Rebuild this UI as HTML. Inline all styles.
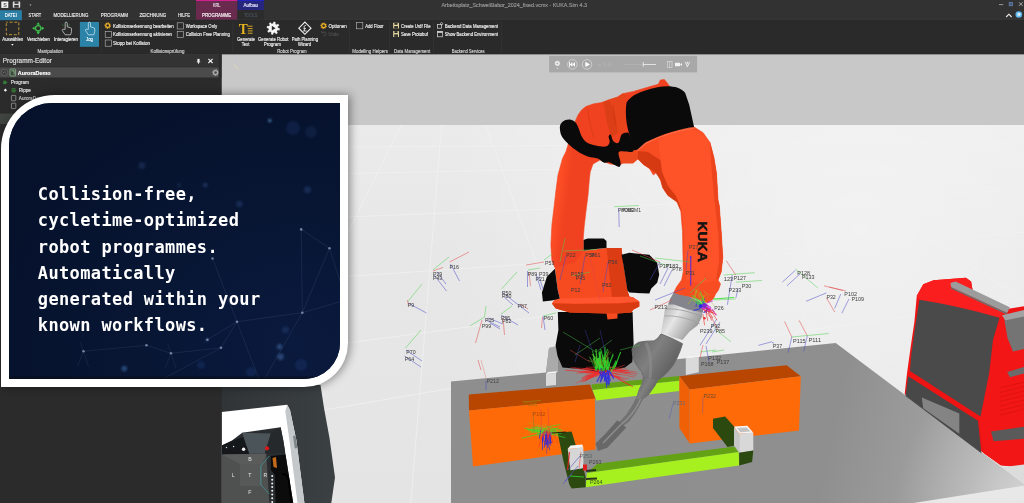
<!DOCTYPE html>
<html><head><meta charset="utf-8">
<style>
html,body{margin:0;padding:0;}
body{width:1024px;height:503px;overflow:hidden;position:relative;background:#e6e6e6;font-family:"Liberation Sans",sans-serif;}
svg{position:absolute;left:0;top:0;}
svg text{font-family:"Liberation Sans",sans-serif;}
#ui text{stroke-width:0.14px;paint-order:stroke;}
#ui,#scene,#card{will-change:transform;}
#card{position:absolute;left:0.5px;top:95px;width:346.5px;height:292px;background:#fff;border-radius:54px 0 44px 0;box-shadow:2px 0px 10px rgba(0,0,0,0.42);}
#cardin{position:absolute;left:7.5px;top:8px;width:331px;height:276px;border-radius:43px 0 36px 0;background:#07142f;overflow:hidden;}
#cardtxt{position:absolute;left:29.3px;top:78.3px;color:#fff;font-family:"DejaVu Sans Mono","Liberation Mono",monospace;font-weight:bold;font-size:17px;letter-spacing:0.37px;line-height:26.15px;white-space:nowrap;}
</style></head>
<body>
<svg id="scene" width="1024" height="503" viewBox="0 0 1024 503">
<defs>
<linearGradient id="sky" x1="0" y1="0" x2="0" y2="1"><stop offset="0" stop-color="#c6c6c6"/><stop offset="1" stop-color="#cdcdcd"/></linearGradient>
<linearGradient id="flr" x1="0" y1="0" x2="0" y2="1"><stop offset="0" stop-color="#ebebeb"/><stop offset="0.35" stop-color="#e7e7e7"/><stop offset="1" stop-color="#e4e4e4"/></linearGradient>
<linearGradient id="l2g" gradientUnits="userSpaceOnUse" x1="550" y1="0" x2="594" y2="6"><stop offset="0" stop-color="#d83a14"/><stop offset="0.25" stop-color="#fb4c24"/><stop offset="0.75" stop-color="#fd4e26"/><stop offset="1" stop-color="#f04220"/></linearGradient>
<linearGradient id="fag" gradientUnits="userSpaceOnUse" x1="660" y1="0" x2="726" y2="-8"><stop offset="0" stop-color="#e03c16"/><stop offset="0.3" stop-color="#fc4a24"/><stop offset="0.8" stop-color="#fb4c24"/><stop offset="1" stop-color="#e23e18"/></linearGradient>
<linearGradient id="tbl" gradientUnits="userSpaceOnUse" x1="451" y1="300" x2="1010" y2="420"><stop offset="0" stop-color="#8e8e8e"/><stop offset="0.7" stop-color="#8f8f8f"/><stop offset="0.85" stop-color="#9c9c9c"/><stop offset="1" stop-color="#adadad"/></linearGradient>
<linearGradient id="torch" x1="0" y1="0" x2="1" y2="0.6"><stop offset="0" stop-color="#5c5c5c"/><stop offset="0.5" stop-color="#808080"/><stop offset="1" stop-color="#5a5a5a"/></linearGradient>
<linearGradient id="silver" x1="0" y1="0" x2="1" y2="0.6"><stop offset="0" stop-color="#9a9a9a"/><stop offset="0.45" stop-color="#e6e6e6"/><stop offset="1" stop-color="#8c8c8c"/></linearGradient>
</defs>
<rect x="221" y="54" width="803" height="72" fill="#c8c8c8"/>
<rect x="221" y="125" width="803" height="378" fill="url(#flr)"/>
<defs><radialGradient id="flrglow" gradientUnits="userSpaceOnUse" cx="860" cy="230" r="420"><stop offset="0" stop-color="#fff" stop-opacity="0.42"/><stop offset="0.6" stop-color="#fff" stop-opacity="0.2"/><stop offset="1" stop-color="#fff" stop-opacity="0"/></radialGradient></defs><rect x="221" y="125" width="803" height="378" fill="url(#flrglow)"/>
<line x1="330.0" y1="409.0" x2="460.0" y2="386.8" stroke="#f2f2f2" stroke-width="0.7"/>
<line x1="221.0" y1="427.5" x2="330.0" y2="409.0" stroke="#f2f2f2" stroke-width="0.7"/>
<line x1="370.0" y1="340.0" x2="460.0" y2="328.0" stroke="#f2f2f2" stroke-width="0.7"/>
<line x1="221.0" y1="360.0" x2="370.0" y2="340.0" stroke="#f2f2f2" stroke-width="0.7"/>
<line x1="460.0" y1="328.0" x2="560.0" y2="314.0" stroke="#f2f2f2" stroke-width="0.7"/>
<line x1="221.0" y1="285.0" x2="560.0" y2="262.0" stroke="#f2f2f2" stroke-width="0.7"/>
<line x1="221.0" y1="222.0" x2="1024.0" y2="190.0" stroke="#f2f2f2" stroke-width="0.7"/>
<line x1="221.0" y1="176.0" x2="1024.0" y2="160.0" stroke="#f2f2f2" stroke-width="0.7"/>
<line x1="221.0" y1="148.0" x2="1024.0" y2="142.0" stroke="#f2f2f2" stroke-width="0.7"/>
<line x1="441.6" y1="125.0" x2="410.8" y2="503.0" stroke="#f2f2f2" stroke-width="0.7"/>
<line x1="401.2" y1="125.0" x2="221.0" y2="490.0" stroke="#f2f2f2" stroke-width="0.7"/>
<line x1="485.7" y1="125.0" x2="550.0" y2="300.0" stroke="#f2f2f2" stroke-width="0.7"/>
<line x1="580.0" y1="125.0" x2="640.0" y2="200.0" stroke="#f2f2f2" stroke-width="0.7"/>
<line x1="760.0" y1="125.0" x2="1024.0" y2="300.0" stroke="#f2f2f2" stroke-width="0.7"/>
<line x1="860.0" y1="125.0" x2="1024.0" y2="205.0" stroke="#f2f2f2" stroke-width="0.7"/>
<line x1="680.0" y1="125.0" x2="820.0" y2="340.0" stroke="#f2f2f2" stroke-width="0.7"/>
<line x1="720.0" y1="260.0" x2="1024.0" y2="232.0" stroke="#f2f2f2" stroke-width="0.7"/>
<line x1="740.0" y1="340.0" x2="1024.0" y2="300.0" stroke="#f2f2f2" stroke-width="0.7"/>
<polygon points="451.0,381.5 546.0,372.6 549.0,348.0 560.0,346.0 640.0,346.0 640.0,363.0 835.7,343.1 1024.0,484.0 1024.0,485.6 913.5,503.0 451.0,503.0" fill="url(#tbl)" />
<defs><radialGradient id="tglow" gradientUnits="userSpaceOnUse" cx="1045" cy="505" r="150"><stop offset="0" stop-color="#fff" stop-opacity="0.55"/><stop offset="0.5" stop-color="#fff" stop-opacity="0.22"/><stop offset="1" stop-color="#fff" stop-opacity="0"/></radialGradient></defs>
<polygon points="835.7,343.1 1024.0,484.0 1024.0,485.6 913.5,503.0 800.0,503.0" fill="url(#tglow)" />
<polygon points="546.0,372.6 549.0,348.0 558.0,345.6 558.0,372.0" fill="#aaaaaa" />
<polygon points="557.8,312.0 558.4,330.0 555.6,345.3 557.5,356.0 562.5,367.6 585.3,369.5 600.0,373.0 625.0,367.5 632.2,362.0 633.6,344.0 632.6,312.0" fill="#0a0a0a" />
<polygon points="583.3,250.8 606.5,247.9 621.5,247.9 623.4,264.8 627.4,290.6 629.4,296.6 633.4,297.6 639.3,301.5 639.3,306.5 633.4,309.5 631.4,312.5 617.5,313.5 617.5,318.4 607.5,319.4 606.5,313.5 569.8,312.5 555.8,308.5 551.9,303.5 554.9,299.6 559.8,298.6 557.8,290.6 554.9,267.7" fill="#f64a20" />
<polygon points="554.9,299.6 559.8,298.6 629.4,296.6 633.4,297.6 639.3,301.5 620.0,303.0 575.0,303.5 552.5,302.5" fill="#ff5630" />
<polygon points="551.9,303.5 575.0,304.0 620.0,303.5 639.3,302.0 639.3,306.5 633.4,309.5 631.4,312.5 617.5,313.5 606.5,313.5 569.8,312.5 555.8,308.5" fill="#d83a12" />
<polygon points="606.5,247.9 621.5,247.9 623.4,264.8 627.4,290.6 629.4,296.6 612.0,297.0" fill="#dc3c14" />
<polygon points="621.5,254.8 629.4,252.8 649.3,254.8 657.2,262.8 659.2,274.7 657.2,282.7 651.3,288.6 649.3,293.6 629.4,292.6 627.4,290.6 623.4,264.8" fill="#0a0a0a" />
<polygon points="583.3,239.9 587.7,238.5 603.6,238.5 606.5,240.9 606.5,247.9 595.6,248.9 583.3,250.8" fill="#0a0a0a" />
<polygon points="554.9,268.7 546.9,276.7 541.9,292.6 542.9,301.5 551.9,300.5 559.8,298.6 557.8,290.6" fill="#0a0a0a" />
<polygon points="558.0,175.0 562.5,158.5 566.0,151.5 571.0,135.0 574.0,124.0 577.9,115.2 581.5,110.0 585.9,106.5 593.8,103.8 601.8,102.5 608.2,100.1 617.7,96.9 622.5,93.7 633.6,91.4 650.0,86.6 658.3,84.2 660.3,80.0 664.3,79.4 667.3,83.0 669.3,85.9 640.0,100.0 634.0,150.0 630.0,158.0 620.0,165.0 610.0,164.0 600.0,160.0 593.0,164.0 590.2,172.0 589.3,180.0 588.0,195.5 586.0,211.0 584.2,226.5 583.2,238.9 583.3,250.8 575.0,262.0 554.9,267.7 551.9,260.8 550.9,244.9 551.9,225.0 554.2,205.8 556.0,190.0" fill="url(#l2g)" stroke="#f04420" stroke-width="0.6" stroke-linejoin="round"/>
<polygon points="618.0,146.0 638.0,148.0 639.5,158.0 633.0,163.5 622.0,163.5 615.0,158.0" fill="#ee4a20" />
<polygon points="601.8,102.5 608.2,100.1 617.7,96.9 622.5,93.7 627.0,95.0 625.0,112.0 626.0,128.0 624.0,135.0 617.7,133.0 611.3,137.5 607.4,124.7 605.0,112.0" fill="#e8441c" />
<polygon points="604.2,102.0 609.7,100.4 615.3,116.8 617.7,132.7 611.3,137.5 607.4,124.7 605.0,112.0" fill="#dc3e18" />
<path d="M587.5,108.8 C589,120 591.5,129.5 593.8,137.5" stroke="#dc3e16" stroke-width="1" fill="none"/>
<path d="M612.5,105 l1.4,2 l-1.2,1.6 l1.6,2 l-1.2,1.6 l1.7,2 l-1.2,1.6 l1.7,2.1 l-1.1,1.6 l1.7,2.1 l-1.1,1.6 l1.6,2.2" stroke="#c2340f" stroke-width="0.7" fill="none"/>
<polygon points="635.5,151.5 637.5,149.6 645.4,142.6 661.3,134.6 677.2,129.7 694.1,127.1 703.1,132.7 710.0,142.6 714.0,158.0 716.5,173.4 718.0,200.0 719.3,205.8 721.2,231.7 722.8,257.5 721.2,271.9 718.0,279.9 720.5,284.0 718.5,290.0 715.6,294.0 713.4,298.8 707.5,302.7 699.5,299.8 689.6,296.8 679.6,297.8 673.7,292.8 676.7,286.8 681.6,279.9 683.2,271.9 683.0,257.5 682.5,231.7 680.8,211.0 677.0,202.0 667.9,195.5 662.7,187.8 660.5,180.0 657.0,172.0 653.4,175.0 649.4,168.4 643.4,164.5 637.5,158.5" fill="#f84c22" stroke="#f04420" stroke-width="0.6" stroke-linejoin="round"/>
<polygon points="637.5,158.5 643.4,164.5 649.4,168.4 655.0,172.0 660.5,180.0 662.7,187.8 667.9,195.5 677.0,202.0 680.8,211.0 678.0,190.0 670.0,172.0 660.0,160.0 648.0,152.0 638.0,151.0" fill="#d63a12" />
<polygon points="658.3,140.6 669.3,132.7 689.2,128.7 701.1,131.7 710.0,142.6 714.0,158.0 716.5,173.4 718.0,200.0 719.3,205.8 721.2,231.7 722.8,257.5 721.2,271.9 718.0,279.9 700.0,284.0 686.0,280.0 684.5,257.5 684.0,231.7 682.0,211.0 676.0,196.0 668.0,186.0 662.0,172.0" fill="#fe5228" />
<polygon points="710.0,142.6 714.0,158.0 716.5,173.4 718.0,200.0 719.3,205.8 721.2,231.7 722.8,257.5 721.2,271.9 718.0,279.9 716.0,279.0 719.0,262.0 718.5,235.0 715.0,205.0 712.0,175.0" fill="#ec441c" />
<path d="M637.5,150.5 L645.4,143.6 C662,135 680,130 694.1,128.1" stroke="#ff6a44" stroke-width="1.4" fill="none"/>
<path d="M626.5,102.8 C630,96 640,91 657.4,87.3 C668,85 680,86 685.2,92.9 L689.2,104.8 L694.1,127.1 C680,129 662,134 645.4,142.6 L637.5,149.6 L633.5,150.5 L629.5,134.6 C626,125 625,112 626.5,102.8Z" fill="#0a0a0a" />
<path d="M559.9,128.7C559.7,126.5 560.1,125.1 560.9,123.7C561.7,122.3 563.2,121.0 564.9,120.3C566.6,119.6 569.1,119.3 570.9,119.7C572.7,120.1 574.5,121.2 575.8,122.7C577.1,124.2 577.8,126.4 578.8,128.7C579.8,131.0 580.5,134.3 581.8,136.6C583.1,138.9 584.5,141.1 586.8,142.6C589.1,144.1 592.6,144.9 595.7,145.6C598.9,146.3 603.4,147.1 605.7,146.6C608.0,146.1 609.1,144.3 609.6,142.6C610.1,140.9 608.4,137.9 608.6,136.6C608.8,135.3 609.8,133.8 610.6,134.6C611.4,135.4 612.3,140.3 613.6,141.6C614.9,142.9 617.3,143.8 618.6,142.6C619.9,141.4 620.3,136.2 621.6,134.6C622.9,132.9 625.2,132.7 626.5,132.7C627.8,132.7 628.3,131.6 629.5,134.6C630.7,137.6 634.2,147.7 633.5,150.5C632.8,153.3 627.8,151.3 625.5,151.5C623.2,151.7 620.8,151.0 619.6,151.5C618.5,152.0 618.4,152.7 618.6,154.5C618.8,156.3 620.4,160.4 620.6,162.5C620.8,164.6 620.4,166.3 619.6,166.8C618.8,167.3 617.3,166.2 615.6,165.5C613.9,164.8 611.6,163.0 609.6,162.5C607.6,162.0 605.7,163.2 603.7,162.5C601.7,161.8 600.4,159.5 597.7,158.5C595.1,157.5 591.1,157.7 587.8,156.5C584.5,155.3 580.9,153.5 577.8,151.5C574.6,149.5 571.5,147.1 568.9,144.6C566.2,142.1 563.4,139.2 561.9,136.6C560.4,133.9 560.1,130.8 559.9,128.7Z" fill="#0a0a0a" />
<text x="0" y="0" transform="translate(698,221.3) rotate(90)" font-size="13" font-weight="bold" fill="#141414" stroke="#141414" stroke-width="0.55" textLength="40.5" lengthAdjust="spacingAndGlyphs">KUKA</text>
<polygon points="591.4,384.5 679.5,375.9 679.5,380.7 592.5,389.9" fill="#62a214" />
<polygon points="592.5,389.9 679.5,380.7 679.5,390.9 596.3,400.6" fill="#a6f020" />
<polygon points="546.0,374.0 556.0,373.0 556.0,385.0 546.0,386.0" fill="#d9d9d9" />
<polygon points="546.0,374.0 548.0,372.0 557.5,371.2 556.0,373.0" fill="#f4f4f4" />
<polygon points="468.8,394.6 590.0,384.6 595.5,398.7 469.0,410.5" fill="#b84500" />
<polygon points="469.0,410.5 594.9,398.5 595.5,449.5 473.0,466.5" fill="#ff6a08" />
<polygon points="685.8,358.5 698.8,357.0 698.8,372.3 685.8,374.9" fill="#dadada" />
<polygon points="685.8,358.5 688.0,356.5 700.5,355.2 698.8,357.0" fill="#f4f4f4" />
<polygon points="679.4,376.2 786.6,365.3 800.8,376.2 689.7,389.6" fill="#b84500" />
<polygon points="679.4,376.2 689.7,389.6 689.7,443.4 679.4,427.9" fill="#f06006" />
<polygon points="689.7,389.6 800.8,376.2 799.0,430.4 689.7,443.4" fill="#ff6a08" />
<polygon points="597.4,463.7 735.7,446.4 738.7,452.0 586.9,473.1" fill="#62a214" />
<polygon points="586.9,473.1 738.7,452.0 739.2,465.6 585.7,487.2" fill="#a6f020" />
<polygon points="557.6,432.8 571.6,431.6 576.0,446.0 568.0,448.0 570.5,470.3 583.4,468.0 585.7,477.3 585.7,487.2 571.6,488.6 569.3,484.4 563.4,460.9" fill="#2c4a10" />
<polygon points="567.7,449.0 583.4,447.4 583.4,468.0 570.5,470.3" fill="#d6d6d6" />
<polygon points="567.7,449.0 570.5,445.6 582.2,444.6 583.4,447.4" fill="#f4f4f4" />
<polygon points="713.0,418.7 725.1,416.4 734.5,427.0 734.0,445.7 727.5,446.9 713.0,428.1" fill="#2c4a10" />
<polygon points="734.0,427.0 739.2,433.5 739.2,452.7 734.0,445.7" fill="#c6c6c6" />
<polygon points="739.2,433.5 753.3,432.8 753.3,450.4 739.2,452.7" fill="#d8d8d8" />
<polygon points="734.0,426.6 747.4,425.8 753.3,432.8 739.2,433.5" fill="#f4f4f4" />
<polygon points="737.0,428.0 746.5,427.4 750.5,431.6 740.3,432.2" fill="#c2c2c2" />
<polygon points="739.2,452.7 753.3,450.4 752.1,462.1 739.2,465.6" fill="#2c4a10" />
<polygon points="668.7,303.7 673.7,297.8 690.0,303.0 703.5,307.7 701.5,317.7 697.5,325.6 689.6,331.6 682.5,340.0 672.0,337.0 661.0,332.5 663.7,317.7 664.7,309.7" fill="url(#silver)" />
<polygon points="673.7,292.8 679.6,294.8 689.6,296.8 699.5,301.7 703.5,307.7 702.8,312.5 688.0,309.5 674.0,304.5 668.2,304.6 670.0,299.0" fill="#84848c" />
<path d="M666,309 C676,308 692,312 702.5,317" stroke="#9a9a9a" stroke-width="0.8" fill="none"/><path d="M664.5,316 C676,315 690,319 700,324" stroke="#a0a0a0" stroke-width="0.8" fill="none"/>
<polygon points="661.0,333.9 672.0,338.5 682.5,343.7 680.0,351.0 677.0,358.0 673.6,364.6 669.0,370.5 663.8,375.7 658.2,379.9 644.0,378.0 641.5,371.5 637.5,366.5 634.6,361.8 632.6,355.0 632.0,349.2 634.5,345.0 638.7,342.3 646.0,341.2 654.1,340.9 658.0,338.0" fill="url(#torch)" stroke="#6a6a6a" stroke-width="1" stroke-linejoin="round"/>
<polygon points="642.9,377.1 658.2,379.9 655.5,385.5 648.5,395.2 642.9,399.4 636.0,398.0 638.7,389.6 641.5,383.5" fill="url(#torch)" />
<polygon points="636.0,398.0 642.9,399.4 636.0,411.9 629.0,421.7 623.4,425.8 617.9,423.6 626.2,414.7 633.2,403.6" fill="#727272" />
<polygon points="617.5,421.3 625.2,427.5 607.0,447.0 598.4,450.0 596.4,443.8 606.4,433.8" fill="#686868" stroke="#686868" stroke-width="1.6" stroke-linejoin="round"/>
<path d="M640.5,399 C636,410 628,419 621,424.5 L603,443" stroke="#9a9a9a" stroke-width="1.3" fill="none" stroke-opacity="0.8"/>
<path d="M646,343 C650,350 652,365 650,378" stroke="#8e8e8e" stroke-width="3" fill="none" stroke-opacity="0.6"/>
<polygon points="923.3,284.2 933.6,280.3 965.9,277.8 971.1,281.6 972.9,292.0 1008.5,308.8 1024.0,306.2 1024.0,467.7 1000.8,465.3 983.9,453.2 909.0,397.3 904.7,394.0 907.0,373.4 910.6,347.5 914.4,321.7 916.8,295.8" fill="#ee1414" />
<polygon points="999.5,317.8 1002.0,315.2 1024.0,310.0 1024.0,467.7 1000.8,465.3 983.9,453.2 979.0,419.4 989.1,373.4 993.0,339.8" fill="#f21616" />
<polygon points="923.3,284.2 933.6,280.3 965.9,277.8 971.1,281.6 972.9,292.0 1008.5,308.8 1002.0,315.2 999.5,317.8 960.0,308.0 919.4,299.7 916.8,295.8" fill="#fb1e1e" />
<path d="M919.4,299.7 Q960,306 999.5,317.8 L993,339.8 L989.1,373.4 L980.5,416.5 L910,371 L911.2,355.3 L914.8,329.4Z" fill="#4a4a4a" />
<polygon points="908.2,376.2 978.0,420.8 981.4,453.2 905.5,396.0" fill="#484848" />
<polygon points="921.8,397.5 959.3,413.6 959.3,433.7 923.2,408.3" fill="#848484" />
<polygon points="950.4,282.9 955.6,281.4 1009.8,307.3 1007.2,313.0 951.2,287.2" fill="#9c9c9c" />
<polygon points="951.2,287.2 1007.2,313.0 1006.6,314.4 950.8,288.6" fill="#6e6e6e" />
<polygon points="1002.0,315.2 1024.0,310.0 1024.0,332.0 1013.7,329.4 1006.0,321.7" fill="#a2a2a2" />
<polygon points="1004.5,320.5 1024.0,316.5 1024.0,349.0 1013.0,351.5 1007.5,338.0" fill="#747474" />
<polygon points="1007.2,372.1 1024.0,366.9 1024.0,373.4 1009.8,377.2" fill="#6b6b6b" />
<polygon points="991.0,431.5 1024.0,426.7 1024.0,438.7 993.5,441.2" fill="#5a5a5a" />
<polygon points="1002.2,467.2 1024.0,464.6 1024.0,483.5" fill="#dcdcdc" />
<line x1="1000" y1="388.0" x2="1024" y2="382.0" stroke="#d41010" stroke-width="0.6"/>
<line x1="1000" y1="392.5" x2="1024" y2="386.5" stroke="#d41010" stroke-width="0.6"/>
<line x1="1000" y1="397.0" x2="1024" y2="391.0" stroke="#d41010" stroke-width="0.6"/>
<line x1="1000" y1="401.5" x2="1024" y2="395.5" stroke="#d41010" stroke-width="0.6"/>
<line x1="1000" y1="406.0" x2="1024" y2="400.0" stroke="#d41010" stroke-width="0.6"/>
<line x1="1000" y1="410.5" x2="1024" y2="404.5" stroke="#d41010" stroke-width="0.6"/>
<line x1="1000" y1="415.0" x2="1024" y2="409.0" stroke="#d41010" stroke-width="0.6"/>
<defs><linearGradient id="slab" x1="0" y1="0" x2="1" y2="0"><stop offset="0" stop-color="#303437"/><stop offset="1" stop-color="#3b4043"/></linearGradient></defs>
<polygon points="221.0,385.0 320.5,385.0 324.0,408.0 329.5,438.0 335.0,477.5 331.3,503.0 221.0,503.0" fill="url(#slab)" />
<polygon points="221.5,412.0 287.2,404.7 290.0,410.0 296.3,440.0 304.4,503.0 221.5,503.0" fill="#ffffff" />
<polygon points="285.3,411.1 287.2,404.7 290.0,410.0 296.3,440.0 304.4,503.0 297.5,503.0 289.4,440.0" fill="#c4c8cb" />
<polygon points="293.0,436.0 295.6,435.6 297.4,448.0 294.8,448.6" fill="#7e8589" />
<polygon points="222.0,445.2 232.0,440.5 242.2,432.8 280.6,427.2 283.2,440.0 293.2,503.0 222.0,503.0" fill="#2a2d2f" />
<polygon points="242.2,432.8 270.9,433.5 264.7,453.7 249.2,453.7" fill="#4b5459" />
<polygon points="270.9,433.5 280.6,427.2 283.2,440.0 285.2,452.5 264.7,453.7" fill="#25292c" />
<polygon points="222.0,445.5 232.0,441.0 243.0,437.0 249.2,453.7 222.0,456.0" fill="#15181a" />
<polygon points="222.0,454.5 266.3,453.7 269.4,503.0 222.0,503.0" fill="#4f5050" />
<polygon points="222.0,454.5 266.3,453.7 262.0,464.0 240.0,464.0" fill="#5a5b5b" />
<polygon points="240.0,464.0 262.0,464.0 262.0,486.0 240.0,486.0" fill="#575858" />
<polygon points="270.9,456.0 285.5,454.5 293.2,503.0 275.6,503.0 274.8,474.7 270.9,470.0" fill="#0c0c0c" />
<path d="M282,474 q6,0 6.5,6 l3,23" stroke="#000" stroke-width="1.8" fill="none"/>
<polygon points="272.5,458.0 276.0,457.0 277.0,468.0 273.5,467.0" fill="#c46a1a" />
<circle cx="267" cy="448.3" r="2.1" fill="#d81818"/>
<circle cx="243.6" cy="449.2" r="1.7" fill="#f2f2f2"/><circle cx="233.6" cy="446.5" r="0.7" fill="#ddd"/><circle cx="226.5" cy="447.5" r="0.7" fill="#ddd"/>
<path d="M269.3,456 L260.8,466.2 L260.8,484.8 L269.3,494" stroke="#3d9ea0" stroke-width="0.7" fill="none"/>
<circle cx="272.2" cy="476.0" r="1" fill="#f4f4f4"/>
<circle cx="272.2" cy="479.7" r="1" fill="#f4f4f4"/>
<circle cx="272.2" cy="483.4" r="1" fill="#f4f4f4"/>
<circle cx="272.2" cy="487.1" r="1" fill="#f4f4f4"/>
<circle cx="272.2" cy="490.8" r="1" fill="#f4f4f4"/>
<circle cx="272.2" cy="494.5" r="1" fill="#f4f4f4"/>
<circle cx="272.2" cy="498.2" r="1" fill="#f4f4f4"/>
<circle cx="272.2" cy="501.9" r="1" fill="#f4f4f4"/>
<text x="249.9" y="461.2" font-size="5.2" fill="#e6e6e6" text-anchor="middle">B</text>
<text x="233.3" y="477.4" font-size="5.2" fill="#e6e6e6" text-anchor="middle">L</text>
<text x="249.9" y="477.4" font-size="5.2" fill="#e6e6e6" text-anchor="middle">T</text>
<text x="265.3" y="477.4" font-size="5.2" fill="#e6e6e6" text-anchor="middle">R</text>
<text x="249.9" y="494.4" font-size="5.2" fill="#e6e6e6" text-anchor="middle">F</text>
<line x1="235.6" y1="56" x2="235.6" y2="63.5" stroke="#c2c2d2" stroke-width="0.8"/><line x1="233.5" y1="64.5" x2="238" y2="69" stroke="#d6d2b8" stroke-width="1.2"/>
<line x1="449.6" y1="262.0" x2="469.0" y2="252.0" stroke="#e04646" stroke-width="0.60" stroke-opacity="0.85"/>
<line x1="450.5" y1="264.0" x2="459.5" y2="281.0" stroke="#4a4ac8" stroke-width="0.60" stroke-opacity="0.85"/>
<line x1="432.9" y1="270.0" x2="449.0" y2="257.0" stroke="#4fd04f" stroke-width="0.60" stroke-opacity="0.85"/>
<line x1="433.0" y1="271.0" x2="443.0" y2="267.5" stroke="#e04646" stroke-width="0.60" stroke-opacity="0.85"/>
<line x1="434.0" y1="275.0" x2="446.5" y2="291.0" stroke="#4a4ac8" stroke-width="0.60" stroke-opacity="0.85"/>
<line x1="437.0" y1="272.0" x2="446.0" y2="284.0" stroke="#4a4ac8" stroke-width="0.60" stroke-opacity="0.85"/>
<line x1="407.5" y1="302.0" x2="422.0" y2="284.0" stroke="#4fd04f" stroke-width="0.60" stroke-opacity="0.85"/>
<line x1="408.0" y1="303.0" x2="426.5" y2="313.0" stroke="#4a4ac8" stroke-width="0.60" stroke-opacity="0.85"/>
<line x1="407.5" y1="300.0" x2="408.5" y2="306.0" stroke="#e04646" stroke-width="0.60" stroke-opacity="0.85"/>
<line x1="405.5" y1="348.0" x2="421.0" y2="330.0" stroke="#4fd04f" stroke-width="0.60" stroke-opacity="0.85"/>
<line x1="406.0" y1="350.0" x2="422.0" y2="361.0" stroke="#4a4ac8" stroke-width="0.60" stroke-opacity="0.85"/>
<line x1="404.5" y1="356.0" x2="421.0" y2="367.0" stroke="#4a4ac8" stroke-width="0.60" stroke-opacity="0.85"/>
<line x1="501.5" y1="289.0" x2="517.0" y2="272.0" stroke="#4fd04f" stroke-width="0.60" stroke-opacity="0.85"/>
<line x1="502.0" y1="292.0" x2="516.0" y2="303.0" stroke="#4a4ac8" stroke-width="0.60" stroke-opacity="0.85"/>
<line x1="516.0" y1="303.0" x2="529.0" y2="313.0" stroke="#4a4ac8" stroke-width="0.60" stroke-opacity="0.85"/>
<line x1="503.0" y1="296.0" x2="513.0" y2="305.0" stroke="#4a4ac8" stroke-width="0.60" stroke-opacity="0.85"/>
<line x1="520.0" y1="304.0" x2="528.0" y2="309.0" stroke="#e04646" stroke-width="0.60" stroke-opacity="0.85"/>
<line x1="484.5" y1="317.0" x2="486.0" y2="306.0" stroke="#4fd04f" stroke-width="0.60" stroke-opacity="0.85"/>
<line x1="484.5" y1="317.0" x2="470.0" y2="326.0" stroke="#4fd04f" stroke-width="0.60" stroke-opacity="0.85"/>
<line x1="482.0" y1="320.0" x2="475.5" y2="343.0" stroke="#e04646" stroke-width="0.60" stroke-opacity="0.85"/>
<line x1="486.0" y1="320.0" x2="500.0" y2="327.0" stroke="#4a4ac8" stroke-width="0.60" stroke-opacity="0.85"/>
<line x1="488.0" y1="318.0" x2="503.0" y2="324.0" stroke="#4a4ac8" stroke-width="0.60" stroke-opacity="0.85"/>
<line x1="490.0" y1="323.0" x2="500.0" y2="329.0" stroke="#4a4ac8" stroke-width="0.60" stroke-opacity="0.85"/>
<line x1="501.0" y1="315.0" x2="518.0" y2="325.0" stroke="#4a4ac8" stroke-width="0.60" stroke-opacity="0.85"/>
<line x1="503.0" y1="318.0" x2="504.5" y2="335.0" stroke="#e04646" stroke-width="0.60" stroke-opacity="0.85"/>
<line x1="501.0" y1="314.0" x2="512.0" y2="306.0" stroke="#4fd04f" stroke-width="0.60" stroke-opacity="0.85"/>
<line x1="543.0" y1="316.0" x2="545.0" y2="330.0" stroke="#4a4ac8" stroke-width="0.60" stroke-opacity="0.85"/>
<line x1="543.0" y1="316.0" x2="556.0" y2="313.0" stroke="#4fd04f" stroke-width="0.60" stroke-opacity="0.85"/>
<line x1="542.5" y1="317.0" x2="541.5" y2="328.0" stroke="#e04646" stroke-width="0.60" stroke-opacity="0.85"/>
<line x1="544.0" y1="262.0" x2="526.0" y2="265.0" stroke="#e04646" stroke-width="0.60" stroke-opacity="0.85"/>
<line x1="544.0" y1="260.0" x2="552.0" y2="254.0" stroke="#4fd04f" stroke-width="0.60" stroke-opacity="0.85"/>
<line x1="527.5" y1="271.0" x2="527.5" y2="287.0" stroke="#4a4ac8" stroke-width="0.60" stroke-opacity="0.85"/>
<line x1="529.0" y1="272.0" x2="530.5" y2="286.0" stroke="#e04646" stroke-width="0.60" stroke-opacity="0.85"/>
<line x1="536.0" y1="274.0" x2="541.0" y2="290.0" stroke="#4a4ac8" stroke-width="0.60" stroke-opacity="0.85"/>
<line x1="539.0" y1="276.0" x2="543.0" y2="289.0" stroke="#4a4ac8" stroke-width="0.60" stroke-opacity="0.85"/>
<line x1="528.0" y1="270.0" x2="540.0" y2="268.0" stroke="#4fd04f" stroke-width="0.60" stroke-opacity="0.85"/>
<line x1="478.0" y1="360.0" x2="481.0" y2="370.0" stroke="#e04646" stroke-width="0.60" stroke-opacity="0.85"/>
<line x1="723.8" y1="275.0" x2="754.8" y2="272.7" stroke="#4fd04f" stroke-width="0.60" stroke-opacity="0.85"/>
<line x1="726.2" y1="260.7" x2="735.8" y2="275.0" stroke="#e04646" stroke-width="0.60" stroke-opacity="0.85"/>
<line x1="732.2" y1="275.0" x2="727.4" y2="304.8" stroke="#4a4ac8" stroke-width="0.60" stroke-opacity="0.85"/>
<line x1="735.8" y1="282.2" x2="762.0" y2="280.5" stroke="#4fd04f" stroke-width="0.60" stroke-opacity="0.85"/>
<line x1="738.0" y1="289.0" x2="735.8" y2="298.0" stroke="#4a4ac8" stroke-width="0.60" stroke-opacity="0.85"/>
<line x1="714.3" y1="300.0" x2="735.8" y2="298.9" stroke="#4fd04f" stroke-width="0.60" stroke-opacity="0.85"/>
<line x1="782.3" y1="282.2" x2="795.4" y2="270.3" stroke="#4a4ac8" stroke-width="0.60" stroke-opacity="0.85"/>
<line x1="787.0" y1="285.8" x2="800.1" y2="273.8" stroke="#4a4ac8" stroke-width="0.60" stroke-opacity="0.85"/>
<line x1="795.4" y1="269.0" x2="818.0" y2="288.1" stroke="#4fd04f" stroke-width="0.60" stroke-opacity="0.85"/>
<line x1="806.1" y1="301.3" x2="826.4" y2="292.9" stroke="#4a4ac8" stroke-width="0.60" stroke-opacity="0.85"/>
<line x1="824.0" y1="285.8" x2="843.0" y2="290.5" stroke="#e04646" stroke-width="0.60" stroke-opacity="0.85"/>
<line x1="826.4" y1="297.7" x2="834.7" y2="312.0" stroke="#e04646" stroke-width="0.60" stroke-opacity="0.85"/>
<line x1="840.7" y1="294.1" x2="834.7" y2="308.4" stroke="#4a4ac8" stroke-width="0.60" stroke-opacity="0.85"/>
<line x1="849.0" y1="298.9" x2="841.9" y2="313.2" stroke="#4a4ac8" stroke-width="0.60" stroke-opacity="0.85"/>
<line x1="829.0" y1="287.0" x2="846.0" y2="291.0" stroke="#e04646" stroke-width="0.60" stroke-opacity="0.85"/>
<line x1="784.6" y1="321.5" x2="791.8" y2="337.0" stroke="#e04646" stroke-width="0.60" stroke-opacity="0.85"/>
<line x1="799.0" y1="320.3" x2="807.3" y2="335.8" stroke="#e04646" stroke-width="0.60" stroke-opacity="0.85"/>
<line x1="791.8" y1="337.0" x2="828.8" y2="333.5" stroke="#4fd04f" stroke-width="0.60" stroke-opacity="0.85"/>
<line x1="791.8" y1="337.0" x2="788.2" y2="352.5" stroke="#4a4ac8" stroke-width="0.60" stroke-opacity="0.85"/>
<line x1="807.3" y1="335.8" x2="803.7" y2="351.3" stroke="#4a4ac8" stroke-width="0.60" stroke-opacity="0.85"/>
<line x1="758.4" y1="345.4" x2="771.5" y2="341.8" stroke="#4a4ac8" stroke-width="0.60" stroke-opacity="0.85"/>
<line x1="771.5" y1="341.8" x2="774.0" y2="343.5" stroke="#4a4ac8" stroke-width="0.60" stroke-opacity="0.85"/>
<line x1="716.7" y1="319.1" x2="700.0" y2="345.4" stroke="#4a4ac8" stroke-width="0.60" stroke-opacity="0.85"/>
<line x1="714.3" y1="328.7" x2="731.0" y2="341.8" stroke="#4fd04f" stroke-width="0.60" stroke-opacity="0.85"/>
<line x1="720.0" y1="322.0" x2="706.0" y2="344.0" stroke="#4a4ac8" stroke-width="0.60" stroke-opacity="0.85"/>
<line x1="711.0" y1="316.0" x2="718.0" y2="330.0" stroke="#e04646" stroke-width="0.60" stroke-opacity="0.85"/>
<line x1="700.0" y1="352.0" x2="716.0" y2="350.0" stroke="#4fd04f" stroke-width="0.60" stroke-opacity="0.85"/>
<line x1="706.0" y1="346.0" x2="709.0" y2="362.0" stroke="#4a4ac8" stroke-width="0.60" stroke-opacity="0.85"/>
<line x1="703.0" y1="345.0" x2="700.0" y2="358.0" stroke="#e04646" stroke-width="0.60" stroke-opacity="0.85"/>
<line x1="712.0" y1="352.0" x2="724.0" y2="350.0" stroke="#4fd04f" stroke-width="0.60" stroke-opacity="0.85"/>
<line x1="613.9" y1="206.7" x2="639.0" y2="205.5" stroke="#4fd04f" stroke-width="0.60" stroke-opacity="0.85"/>
<line x1="618.7" y1="207.9" x2="619.2" y2="227.0" stroke="#4a4ac8" stroke-width="0.60" stroke-opacity="0.85"/>
<line x1="564.0" y1="251.0" x2="597.0" y2="249.5" stroke="#4fd04f" stroke-width="0.60" stroke-opacity="0.85"/>
<line x1="565.0" y1="238.0" x2="560.0" y2="262.0" stroke="#4fd04f" stroke-width="0.60" stroke-opacity="0.85"/>
<line x1="566.0" y1="256.0" x2="560.0" y2="280.0" stroke="#4a4ac8" stroke-width="0.60" stroke-opacity="0.85"/>
<line x1="585.0" y1="256.0" x2="580.0" y2="284.0" stroke="#4a4ac8" stroke-width="0.60" stroke-opacity="0.85"/>
<line x1="590.0" y1="258.0" x2="600.0" y2="300.0" stroke="#e04646" stroke-width="0.60" stroke-opacity="0.85"/>
<line x1="608.0" y1="262.0" x2="603.0" y2="292.0" stroke="#4a4ac8" stroke-width="0.60" stroke-opacity="0.85"/>
<line x1="572.0" y1="276.0" x2="590.0" y2="272.0" stroke="#4fd04f" stroke-width="0.60" stroke-opacity="0.85"/>
<line x1="640.0" y1="256.0" x2="668.0" y2="266.0" stroke="#4fd04f" stroke-width="0.60" stroke-opacity="0.85"/>
<line x1="660.0" y1="262.0" x2="650.0" y2="280.0" stroke="#4a4ac8" stroke-width="0.60" stroke-opacity="0.85"/>
<line x1="668.0" y1="268.0" x2="660.0" y2="284.0" stroke="#4a4ac8" stroke-width="0.60" stroke-opacity="0.85"/>
<line x1="672.0" y1="270.0" x2="664.0" y2="286.0" stroke="#4a4ac8" stroke-width="0.60" stroke-opacity="0.85"/>
<line x1="632.0" y1="250.0" x2="660.0" y2="262.0" stroke="#e04646" stroke-width="0.60" stroke-opacity="0.85"/>
<line x1="655.0" y1="258.0" x2="690.0" y2="262.0" stroke="#4fd04f" stroke-width="0.60" stroke-opacity="0.85"/>
<line x1="688.0" y1="250.0" x2="686.0" y2="270.0" stroke="#4a4ac8" stroke-width="0.60" stroke-opacity="0.85"/>
<line x1="655.0" y1="300.0" x2="685.0" y2="288.0" stroke="#4a4ac8" stroke-width="0.60" stroke-opacity="0.85"/>
<line x1="650.0" y1="310.0" x2="672.0" y2="300.0" stroke="#e04646" stroke-width="0.60" stroke-opacity="0.85"/>
<line x1="690.7" y1="257" x2="690.7" y2="285.4" stroke="#6a30d0" stroke-width="1.2"/><circle cx="690.7" cy="257" r="1" fill="#6a30d0"/>
<text x="449.6" y="268.6" font-size="5.9" fill="#3c3c3c" textLength="9.4" lengthAdjust="spacingAndGlyphs">P16</text>
<text x="432.9" y="275.7" font-size="5.9" fill="#3c3c3c" textLength="9.4" lengthAdjust="spacingAndGlyphs">P29</text>
<text x="432.9" y="280.0" font-size="5.9" fill="#3c3c3c" textLength="9.4" lengthAdjust="spacingAndGlyphs">P43</text>
<text x="407.9" y="307.2" font-size="5.9" fill="#3c3c3c" textLength="6.3" lengthAdjust="spacingAndGlyphs">P9</text>
<text x="406.2" y="353.9" font-size="5.9" fill="#3c3c3c" textLength="9.4" lengthAdjust="spacingAndGlyphs">P70</text>
<text x="404.8" y="361.1" font-size="5.9" fill="#3c3c3c" textLength="9.4" lengthAdjust="spacingAndGlyphs">P64</text>
<text x="502.0" y="294.8" font-size="5.9" fill="#3c3c3c" textLength="9.4" lengthAdjust="spacingAndGlyphs">P50</text>
<text x="502.0" y="298.4" font-size="5.9" fill="#3c3c3c" textLength="9.4" lengthAdjust="spacingAndGlyphs">P80</text>
<text x="517.6" y="307.9" font-size="5.9" fill="#3c3c3c" textLength="9.4" lengthAdjust="spacingAndGlyphs">P87</text>
<text x="484.9" y="322.2" font-size="5.9" fill="#3c3c3c" textLength="9.4" lengthAdjust="spacingAndGlyphs">P05</text>
<text x="481.8" y="328.2" font-size="5.9" fill="#3c3c3c" textLength="9.4" lengthAdjust="spacingAndGlyphs">P99</text>
<text x="500.9" y="319.9" font-size="5.9" fill="#3c3c3c" textLength="9.4" lengthAdjust="spacingAndGlyphs">P95</text>
<text x="502.0" y="323.4" font-size="5.9" fill="#3c3c3c" textLength="9.4" lengthAdjust="spacingAndGlyphs">P82</text>
<text x="543.8" y="319.9" font-size="5.9" fill="#3c3c3c" textLength="9.4" lengthAdjust="spacingAndGlyphs">P60</text>
<text x="545.0" y="265.0" font-size="5.9" fill="#3c3c3c" textLength="9.4" lengthAdjust="spacingAndGlyphs">P53</text>
<text x="527.8" y="275.7" font-size="5.9" fill="#3c3c3c" textLength="9.4" lengthAdjust="spacingAndGlyphs">P89</text>
<text x="539.0" y="275.7" font-size="5.9" fill="#3c3c3c" textLength="9.4" lengthAdjust="spacingAndGlyphs">P39</text>
<text x="535.4" y="280.5" font-size="5.9" fill="#3c3c3c" textLength="9.4" lengthAdjust="spacingAndGlyphs">P21</text>
<text x="733.4" y="280.0" font-size="5.9" fill="#3c3c3c" textLength="12.6" lengthAdjust="spacingAndGlyphs">P127</text>
<text x="723.8" y="281.0" font-size="5.9" fill="#3c3c3c" textLength="9.4" lengthAdjust="spacingAndGlyphs">123</text>
<text x="741.7" y="288.1" font-size="5.9" fill="#3c3c3c" textLength="9.4" lengthAdjust="spacingAndGlyphs">P30</text>
<text x="728.6" y="292.0" font-size="5.9" fill="#3c3c3c" textLength="12.6" lengthAdjust="spacingAndGlyphs">P233</text>
<text x="714.3" y="310.3" font-size="5.9" fill="#3c3c3c" textLength="9.4" lengthAdjust="spacingAndGlyphs">P26</text>
<text x="710.7" y="328.2" font-size="5.9" fill="#3c3c3c" textLength="9.4" lengthAdjust="spacingAndGlyphs">P92</text>
<text x="715.5" y="333.4" font-size="5.9" fill="#3c3c3c" textLength="9.4" lengthAdjust="spacingAndGlyphs">P85</text>
<text x="700.0" y="333.4" font-size="5.9" fill="#3c3c3c" textLength="12.6" lengthAdjust="spacingAndGlyphs">P239</text>
<text x="797.3" y="274.6" font-size="5.9" fill="#3c3c3c" textLength="12.6" lengthAdjust="spacingAndGlyphs">P128</text>
<text x="802.0" y="278.6" font-size="5.9" fill="#3c3c3c" textLength="12.6" lengthAdjust="spacingAndGlyphs">P133</text>
<text x="826.4" y="298.9" font-size="5.9" fill="#3c3c3c" textLength="9.4" lengthAdjust="spacingAndGlyphs">P32</text>
<text x="844.3" y="296.0" font-size="5.9" fill="#3c3c3c" textLength="12.6" lengthAdjust="spacingAndGlyphs">P102</text>
<text x="851.4" y="301.3" font-size="5.9" fill="#3c3c3c" textLength="12.6" lengthAdjust="spacingAndGlyphs">P109</text>
<text x="793.0" y="343.0" font-size="5.9" fill="#3c3c3c" textLength="12.6" lengthAdjust="spacingAndGlyphs">P115</text>
<text x="808.5" y="341.6" font-size="5.9" fill="#3c3c3c" textLength="12.6" lengthAdjust="spacingAndGlyphs">P111</text>
<text x="772.7" y="347.8" font-size="5.9" fill="#3c3c3c" textLength="9.4" lengthAdjust="spacingAndGlyphs">P37</text>
<text x="708.3" y="359.7" font-size="5.9" fill="#3c3c3c" textLength="12.6" lengthAdjust="spacingAndGlyphs">P132</text>
<text x="716.7" y="364.4" font-size="5.9" fill="#3c3c3c" textLength="12.6" lengthAdjust="spacingAndGlyphs">P137</text>
<text x="701.0" y="366.3" font-size="5.9" fill="#3c3c3c" textLength="12.6" lengthAdjust="spacingAndGlyphs">P168</text>
<text x="618.2" y="212.2" font-size="5.9" fill="#3c3c3c" textLength="15.8" lengthAdjust="spacingAndGlyphs">PHOME</text>
<text x="622.0" y="212.2" font-size="5.9" fill="#3c3c3c" textLength="18.9" lengthAdjust="spacingAndGlyphs">P0B3M1</text>
<text x="566.2" y="256.8" font-size="5.9" fill="#3c3c3c" textLength="9.4" lengthAdjust="spacingAndGlyphs">P22</text>
<text x="585.3" y="256.8" font-size="5.9" fill="#3c3c3c" textLength="9.4" lengthAdjust="spacingAndGlyphs">P58</text>
<text x="591.0" y="256.8" font-size="5.9" fill="#3c3c3c" textLength="9.4" lengthAdjust="spacingAndGlyphs">P61</text>
<text x="608.0" y="263.9" font-size="5.9" fill="#3c3c3c" textLength="9.4" lengthAdjust="spacingAndGlyphs">P56</text>
<text x="659.2" y="268.2" font-size="5.9" fill="#3c3c3c" textLength="12.6" lengthAdjust="spacingAndGlyphs">P171</text>
<text x="665.6" y="268.2" font-size="5.9" fill="#3c3c3c" textLength="12.6" lengthAdjust="spacingAndGlyphs">P183</text>
<text x="672.3" y="270.6" font-size="5.9" fill="#3c3c3c" textLength="9.4" lengthAdjust="spacingAndGlyphs">P78</text>
<text x="689.0" y="249.1" font-size="5.9" fill="#3c3c3c" textLength="9.4" lengthAdjust="spacingAndGlyphs">P27</text>
<text x="571.0" y="275.8" font-size="5.9" fill="#3c3c3c" textLength="12.6" lengthAdjust="spacingAndGlyphs">P159</text>
<text x="575.8" y="280.1" font-size="5.9" fill="#3c3c3c" textLength="9.4" lengthAdjust="spacingAndGlyphs">P45</text>
<text x="571.0" y="292.0" font-size="5.9" fill="#3c3c3c" textLength="9.4" lengthAdjust="spacingAndGlyphs">P12</text>
<text x="602.0" y="287.3" font-size="5.9" fill="#3c3c3c" textLength="9.4" lengthAdjust="spacingAndGlyphs">P62</text>
<text x="685.4" y="275.4" font-size="5.9" fill="#3c3c3c" textLength="9.4" lengthAdjust="spacingAndGlyphs">P31</text>
<text x="654.4" y="308.7" font-size="5.9" fill="#3c3c3c" textLength="12.6" lengthAdjust="spacingAndGlyphs">P213</text>
<line x1="604.3" y1="372.1" x2="583.1" y2="380.9" stroke="#ee2a2a" stroke-width="0.61" stroke-opacity="0.62"/>
<line x1="602.2" y1="371.4" x2="585.7" y2="380.2" stroke="#ee2a2a" stroke-width="0.63" stroke-opacity="0.89"/>
<line x1="604.7" y1="370.2" x2="583.4" y2="377.4" stroke="#ee2a2a" stroke-width="0.62" stroke-opacity="0.94"/>
<line x1="601.9" y1="371.8" x2="586.5" y2="368.3" stroke="#ee2a2a" stroke-width="0.59" stroke-opacity="0.89"/>
<line x1="598.4" y1="372.8" x2="575.6" y2="373.2" stroke="#ee2a2a" stroke-width="0.52" stroke-opacity="0.62"/>
<line x1="599.4" y1="373.4" x2="580.9" y2="372.1" stroke="#ee2a2a" stroke-width="0.64" stroke-opacity="0.70"/>
<line x1="597.7" y1="369.9" x2="582.9" y2="368.6" stroke="#ee2a2a" stroke-width="0.76" stroke-opacity="0.86"/>
<line x1="596.6" y1="372.7" x2="584.9" y2="368.6" stroke="#ee2a2a" stroke-width="0.55" stroke-opacity="0.77"/>
<line x1="595.5" y1="369.2" x2="570.3" y2="367.7" stroke="#ee2a2a" stroke-width="0.59" stroke-opacity="0.84"/>
<line x1="604.9" y1="366.9" x2="585.7" y2="367.3" stroke="#ee2a2a" stroke-width="0.64" stroke-opacity="0.83"/>
<line x1="606.6" y1="370.8" x2="583.7" y2="368.8" stroke="#ee2a2a" stroke-width="0.59" stroke-opacity="0.74"/>
<line x1="601.7" y1="371.9" x2="584.9" y2="381.2" stroke="#ee2a2a" stroke-width="0.52" stroke-opacity="0.87"/>
<line x1="601.8" y1="370.4" x2="584.9" y2="375.8" stroke="#ee2a2a" stroke-width="0.63" stroke-opacity="0.79"/>
<line x1="600.4" y1="373.0" x2="573.7" y2="367.9" stroke="#ee2a2a" stroke-width="0.61" stroke-opacity="0.91"/>
<line x1="601.2" y1="372.4" x2="588.7" y2="377.6" stroke="#ee2a2a" stroke-width="0.65" stroke-opacity="0.81"/>
<line x1="598.4" y1="372.9" x2="582.4" y2="382.0" stroke="#ee2a2a" stroke-width="0.79" stroke-opacity="0.84"/>
<line x1="607.1" y1="372.4" x2="583.5" y2="372.1" stroke="#ee2a2a" stroke-width="0.73" stroke-opacity="0.91"/>
<line x1="604.4" y1="372.7" x2="586.7" y2="376.0" stroke="#ee2a2a" stroke-width="0.52" stroke-opacity="0.62"/>
<line x1="601.1" y1="371.0" x2="585.5" y2="377.3" stroke="#ee2a2a" stroke-width="0.55" stroke-opacity="0.64"/>
<line x1="599.7" y1="370.3" x2="575.6" y2="383.5" stroke="#ee2a2a" stroke-width="0.58" stroke-opacity="0.72"/>
<line x1="604.4" y1="370.9" x2="579.7" y2="381.8" stroke="#ee2a2a" stroke-width="0.65" stroke-opacity="0.63"/>
<line x1="601.8" y1="370.0" x2="586.9" y2="373.4" stroke="#ee2a2a" stroke-width="0.51" stroke-opacity="0.93"/>
<line x1="604.6" y1="371.4" x2="585.4" y2="379.5" stroke="#ee2a2a" stroke-width="0.79" stroke-opacity="0.90"/>
<line x1="603.6" y1="374.0" x2="587.0" y2="379.0" stroke="#ee2a2a" stroke-width="0.66" stroke-opacity="0.87"/>
<line x1="606.8" y1="370.6" x2="582.0" y2="379.1" stroke="#ee2a2a" stroke-width="0.74" stroke-opacity="0.89"/>
<line x1="600.6" y1="371.4" x2="581.3" y2="377.9" stroke="#ee2a2a" stroke-width="0.51" stroke-opacity="0.70"/>
<line x1="594.3" y1="372.5" x2="565.3" y2="370.2" stroke="#ee2a2a" stroke-width="0.80" stroke-opacity="0.93"/>
<line x1="601.7" y1="372.3" x2="587.9" y2="377.0" stroke="#ee2a2a" stroke-width="0.69" stroke-opacity="0.92"/>
<line x1="601.4" y1="370.2" x2="578.5" y2="372.6" stroke="#ee2a2a" stroke-width="0.70" stroke-opacity="0.92"/>
<line x1="603.3" y1="374.2" x2="583.9" y2="371.6" stroke="#ee2a2a" stroke-width="0.60" stroke-opacity="0.88"/>
<line x1="611.6" y1="369.9" x2="629.6" y2="370.5" stroke="#ee2a2a" stroke-width="0.55" stroke-opacity="0.64"/>
<line x1="610.4" y1="374.0" x2="633.1" y2="386.9" stroke="#ee2a2a" stroke-width="0.79" stroke-opacity="0.83"/>
<line x1="614.9" y1="371.5" x2="627.4" y2="373.7" stroke="#ee2a2a" stroke-width="0.69" stroke-opacity="0.78"/>
<line x1="608.0" y1="369.8" x2="635.3" y2="371.6" stroke="#ee2a2a" stroke-width="0.58" stroke-opacity="0.70"/>
<line x1="605.6" y1="371.5" x2="620.5" y2="374.7" stroke="#ee2a2a" stroke-width="0.77" stroke-opacity="0.72"/>
<line x1="601.1" y1="373.1" x2="628.6" y2="379.0" stroke="#ee2a2a" stroke-width="0.65" stroke-opacity="0.79"/>
<line x1="607.1" y1="371.2" x2="624.9" y2="365.0" stroke="#ee2a2a" stroke-width="0.74" stroke-opacity="0.66"/>
<line x1="605.3" y1="373.1" x2="625.2" y2="380.3" stroke="#ee2a2a" stroke-width="0.67" stroke-opacity="0.87"/>
<line x1="606.1" y1="374.4" x2="620.8" y2="377.2" stroke="#ee2a2a" stroke-width="0.65" stroke-opacity="0.80"/>
<line x1="604.3" y1="369.5" x2="620.6" y2="378.9" stroke="#ee2a2a" stroke-width="0.65" stroke-opacity="0.84"/>
<line x1="611.3" y1="369.9" x2="630.6" y2="373.1" stroke="#ee2a2a" stroke-width="0.76" stroke-opacity="0.93"/>
<line x1="607.9" y1="370.1" x2="636.2" y2="375.5" stroke="#ee2a2a" stroke-width="0.54" stroke-opacity="0.75"/>
<line x1="604.5" y1="367.9" x2="615.8" y2="366.6" stroke="#ee2a2a" stroke-width="0.77" stroke-opacity="0.65"/>
<line x1="612.8" y1="367.5" x2="625.2" y2="371.1" stroke="#ee2a2a" stroke-width="0.57" stroke-opacity="0.93"/>
<line x1="607.9" y1="370.0" x2="637.5" y2="373.5" stroke="#ee2a2a" stroke-width="0.63" stroke-opacity="0.78"/>
<line x1="606.9" y1="370.6" x2="623.1" y2="368.0" stroke="#ee2a2a" stroke-width="0.67" stroke-opacity="0.75"/>
<line x1="605.9" y1="370.9" x2="628.4" y2="370.3" stroke="#ee2a2a" stroke-width="0.80" stroke-opacity="0.88"/>
<line x1="612.1" y1="371.9" x2="626.9" y2="368.1" stroke="#ee2a2a" stroke-width="0.58" stroke-opacity="0.65"/>
<line x1="606.9" y1="372.1" x2="629.7" y2="385.4" stroke="#ee2a2a" stroke-width="0.78" stroke-opacity="0.80"/>
<line x1="605.8" y1="369.1" x2="616.6" y2="366.2" stroke="#ee2a2a" stroke-width="0.52" stroke-opacity="0.93"/>
<line x1="607.7" y1="370.4" x2="618.3" y2="375.2" stroke="#ee2a2a" stroke-width="0.76" stroke-opacity="0.76"/>
<line x1="606.8" y1="372.0" x2="634.9" y2="377.2" stroke="#ee2a2a" stroke-width="0.66" stroke-opacity="0.68"/>
<line x1="603.8" y1="371.7" x2="600.3" y2="363.7" stroke="#2fe02f" stroke-width="0.88" stroke-opacity="0.87"/>
<line x1="602.7" y1="370.3" x2="602.7" y2="359.8" stroke="#2fe02f" stroke-width="0.85" stroke-opacity="0.61"/>
<line x1="596.1" y1="370.7" x2="596.7" y2="360.1" stroke="#2fe02f" stroke-width="0.76" stroke-opacity="0.89"/>
<line x1="600.2" y1="371.5" x2="600.1" y2="351.8" stroke="#2fe02f" stroke-width="1.11" stroke-opacity="0.94"/>
<line x1="601.0" y1="368.5" x2="608.1" y2="352.0" stroke="#2fe02f" stroke-width="0.91" stroke-opacity="0.62"/>
<line x1="602.9" y1="371.2" x2="593.7" y2="355.3" stroke="#2fe02f" stroke-width="0.75" stroke-opacity="0.89"/>
<line x1="603.1" y1="371.7" x2="605.6" y2="360.0" stroke="#2fe02f" stroke-width="0.98" stroke-opacity="0.66"/>
<line x1="606.7" y1="369.6" x2="600.6" y2="349.0" stroke="#2fe02f" stroke-width="0.85" stroke-opacity="0.94"/>
<line x1="600.5" y1="371.5" x2="599.1" y2="363.6" stroke="#2fe02f" stroke-width="1.00" stroke-opacity="0.67"/>
<line x1="605.6" y1="371.1" x2="598.9" y2="361.5" stroke="#2fe02f" stroke-width="0.73" stroke-opacity="0.61"/>
<line x1="598.1" y1="369.4" x2="592.9" y2="354.0" stroke="#2fe02f" stroke-width="1.09" stroke-opacity="0.85"/>
<line x1="604.7" y1="369.9" x2="603.0" y2="357.4" stroke="#2fe02f" stroke-width="1.13" stroke-opacity="0.83"/>
<line x1="599.6" y1="367.7" x2="607.8" y2="348.9" stroke="#2fe02f" stroke-width="1.19" stroke-opacity="0.65"/>
<line x1="604.9" y1="366.5" x2="605.0" y2="346.8" stroke="#2fe02f" stroke-width="1.05" stroke-opacity="0.91"/>
<line x1="604.6" y1="370.2" x2="607.2" y2="359.3" stroke="#2fe02f" stroke-width="0.92" stroke-opacity="0.64"/>
<line x1="599.8" y1="367.8" x2="601.0" y2="351.1" stroke="#2fe02f" stroke-width="0.99" stroke-opacity="0.60"/>
<line x1="598.7" y1="369.4" x2="603.2" y2="355.0" stroke="#2fe02f" stroke-width="0.74" stroke-opacity="0.86"/>
<line x1="602.7" y1="368.7" x2="596.9" y2="358.5" stroke="#2fe02f" stroke-width="1.14" stroke-opacity="0.94"/>
<line x1="600.9" y1="366.9" x2="598.8" y2="352.3" stroke="#2fe02f" stroke-width="1.07" stroke-opacity="0.82"/>
<line x1="602.9" y1="368.3" x2="598.1" y2="357.8" stroke="#2fe02f" stroke-width="1.04" stroke-opacity="0.60"/>
<line x1="596.4" y1="366.2" x2="592.4" y2="350.6" stroke="#2fe02f" stroke-width="0.87" stroke-opacity="0.78"/>
<line x1="599.6" y1="368.2" x2="598.5" y2="358.8" stroke="#2fe02f" stroke-width="1.29" stroke-opacity="0.93"/>
<line x1="601.2" y1="368.6" x2="599.1" y2="350.8" stroke="#2fe02f" stroke-width="0.86" stroke-opacity="0.67"/>
<line x1="600.3" y1="370.9" x2="596.0" y2="356.5" stroke="#2fe02f" stroke-width="1.27" stroke-opacity="0.65"/>
<line x1="597.4" y1="367.6" x2="595.9" y2="349.0" stroke="#2fe02f" stroke-width="1.24" stroke-opacity="0.77"/>
<line x1="595.6" y1="369.5" x2="589.7" y2="356.9" stroke="#2fe02f" stroke-width="0.78" stroke-opacity="0.72"/>
<line x1="598.0" y1="365.2" x2="599.2" y2="357.2" stroke="#2fe02f" stroke-width="0.77" stroke-opacity="0.92"/>
<line x1="595.9" y1="370.4" x2="598.1" y2="359.2" stroke="#2fe02f" stroke-width="1.30" stroke-opacity="0.81"/>
<line x1="599.3" y1="369.3" x2="597.8" y2="358.1" stroke="#2fe02f" stroke-width="1.20" stroke-opacity="0.70"/>
<line x1="596.1" y1="368.9" x2="593.2" y2="358.1" stroke="#2fe02f" stroke-width="0.92" stroke-opacity="0.93"/>
<line x1="615.1" y1="366.5" x2="620.6" y2="352.0" stroke="#2fe02f" stroke-width="1.03" stroke-opacity="0.85"/>
<line x1="609.1" y1="366.1" x2="612.9" y2="353.3" stroke="#2fe02f" stroke-width="0.87" stroke-opacity="0.62"/>
<line x1="607.6" y1="370.4" x2="604.4" y2="357.1" stroke="#2fe02f" stroke-width="1.14" stroke-opacity="0.94"/>
<line x1="606.2" y1="368.3" x2="608.8" y2="357.0" stroke="#2fe02f" stroke-width="0.80" stroke-opacity="0.66"/>
<line x1="610.2" y1="373.3" x2="616.2" y2="360.6" stroke="#2fe02f" stroke-width="1.30" stroke-opacity="0.76"/>
<line x1="608.3" y1="369.7" x2="606.6" y2="360.8" stroke="#2fe02f" stroke-width="0.84" stroke-opacity="0.69"/>
<line x1="606.4" y1="370.1" x2="613.4" y2="354.6" stroke="#2fe02f" stroke-width="1.01" stroke-opacity="0.73"/>
<line x1="610.5" y1="368.8" x2="607.2" y2="357.9" stroke="#2fe02f" stroke-width="1.00" stroke-opacity="0.82"/>
<line x1="609.0" y1="371.0" x2="607.2" y2="359.9" stroke="#2fe02f" stroke-width="0.97" stroke-opacity="0.93"/>
<line x1="613.6" y1="369.6" x2="616.9" y2="362.1" stroke="#2fe02f" stroke-width="1.24" stroke-opacity="0.77"/>
<line x1="609.0" y1="370.3" x2="613.8" y2="378.6" stroke="#2a2ae0" stroke-width="1.31" stroke-opacity="0.94"/>
<line x1="599.5" y1="371.6" x2="602.4" y2="378.4" stroke="#2a2ae0" stroke-width="1.36" stroke-opacity="0.85"/>
<line x1="603.2" y1="371.8" x2="600.4" y2="381.5" stroke="#2a2ae0" stroke-width="1.27" stroke-opacity="0.68"/>
<line x1="605.6" y1="373.1" x2="604.3" y2="381.7" stroke="#2a2ae0" stroke-width="1.18" stroke-opacity="0.84"/>
<line x1="601.4" y1="371.0" x2="606.1" y2="380.7" stroke="#2a2ae0" stroke-width="0.93" stroke-opacity="0.81"/>
<line x1="608.2" y1="371.3" x2="610.3" y2="381.2" stroke="#2a2ae0" stroke-width="1.33" stroke-opacity="0.77"/>
<line x1="603.3" y1="370.4" x2="607.1" y2="384.5" stroke="#2a2ae0" stroke-width="0.81" stroke-opacity="0.77"/>
<line x1="600.6" y1="368.0" x2="601.3" y2="376.3" stroke="#2a2ae0" stroke-width="0.94" stroke-opacity="0.61"/>
<line x1="605.7" y1="375.4" x2="606.7" y2="387.5" stroke="#2a2ae0" stroke-width="1.24" stroke-opacity="0.78"/>
<line x1="604.9" y1="370.7" x2="600.8" y2="378.4" stroke="#2a2ae0" stroke-width="0.93" stroke-opacity="0.87"/>
<line x1="604.8" y1="373.3" x2="600.1" y2="382.6" stroke="#2a2ae0" stroke-width="1.05" stroke-opacity="0.83"/>
<line x1="605.9" y1="377.3" x2="609.3" y2="386.2" stroke="#2a2ae0" stroke-width="0.89" stroke-opacity="0.62"/>
<line x1="607.6" y1="369.8" x2="609.2" y2="383.8" stroke="#2a2ae0" stroke-width="1.40" stroke-opacity="0.93"/>
<line x1="604.0" y1="371.5" x2="608.6" y2="385.1" stroke="#2a2ae0" stroke-width="1.20" stroke-opacity="0.73"/>
<line x1="606.4" y1="372.0" x2="607.7" y2="379.4" stroke="#2a2ae0" stroke-width="1.01" stroke-opacity="0.93"/>
<line x1="600.5" y1="374.9" x2="596.9" y2="381.9" stroke="#2a2ae0" stroke-width="1.29" stroke-opacity="0.75"/>
<line x1="601.7" y1="365.4" x2="600.8" y2="354.9" stroke="#8a8a20" stroke-width="0.61" stroke-opacity="0.91"/>
<line x1="600.1" y1="365.4" x2="595.7" y2="350.3" stroke="#8a8a20" stroke-width="0.51" stroke-opacity="0.62"/>
<line x1="602.2" y1="364.9" x2="591.8" y2="354.1" stroke="#8a8a20" stroke-width="0.58" stroke-opacity="0.94"/>
<line x1="599.0" y1="367.5" x2="589.1" y2="356.8" stroke="#8a8a20" stroke-width="0.50" stroke-opacity="0.86"/>
<line x1="602.2" y1="366.2" x2="609.2" y2="350.4" stroke="#8a8a20" stroke-width="0.64" stroke-opacity="0.93"/>
<line x1="596.8" y1="367.0" x2="593.7" y2="358.5" stroke="#8a8a20" stroke-width="0.78" stroke-opacity="0.66"/>
<line x1="600.6" y1="363.3" x2="611.4" y2="351.7" stroke="#8a8a20" stroke-width="0.60" stroke-opacity="0.71"/>
<line x1="601.6" y1="369.2" x2="607.0" y2="364.8" stroke="#8a8a20" stroke-width="0.57" stroke-opacity="0.62"/>
<line x1="606.2" y1="365.5" x2="607.8" y2="355.7" stroke="#8a8a20" stroke-width="0.80" stroke-opacity="0.69"/>
<line x1="599.2" y1="363.9" x2="587.7" y2="360.3" stroke="#8a8a20" stroke-width="0.57" stroke-opacity="0.75"/>
<line x1="563.0" y1="332.0" x2="596.0" y2="352.0" stroke="#4fd04f" stroke-width="0.60" stroke-opacity="0.70"/>
<line x1="596.0" y1="352.0" x2="612.0" y2="340.0" stroke="#4fd04f" stroke-width="0.60" stroke-opacity="0.70"/>
<line x1="575.0" y1="355.0" x2="600.0" y2="338.0" stroke="#4fd04f" stroke-width="0.60" stroke-opacity="0.70"/>
<line x1="570.0" y1="350.0" x2="590.0" y2="362.0" stroke="#e04646" stroke-width="0.60" stroke-opacity="0.70"/>
<line x1="580.0" y1="345.0" x2="575.0" y2="362.0" stroke="#4a4ac8" stroke-width="0.60" stroke-opacity="0.70"/>
<line x1="620.0" y1="350.0" x2="640.0" y2="345.0" stroke="#4fd04f" stroke-width="0.60" stroke-opacity="0.70"/>
<line x1="585.0" y1="330.0" x2="592.0" y2="350.0" stroke="#3a3ab0" stroke-width="0.60" stroke-opacity="0.70"/>
<line x1="600.0" y1="330.0" x2="605.0" y2="352.0" stroke="#3a3ab0" stroke-width="0.60" stroke-opacity="0.70"/>
<line x1="547.5" y1="428.6" x2="531.4" y2="427.1" stroke="#2fe02f" stroke-width="0.65" stroke-opacity="0.89"/>
<line x1="544.9" y1="429.7" x2="534.3" y2="429.3" stroke="#2fe02f" stroke-width="0.70" stroke-opacity="0.69"/>
<line x1="543.6" y1="432.8" x2="530.2" y2="430.0" stroke="#2fe02f" stroke-width="1.00" stroke-opacity="0.78"/>
<line x1="546.4" y1="430.9" x2="531.8" y2="428.6" stroke="#2fe02f" stroke-width="0.79" stroke-opacity="0.89"/>
<line x1="544.6" y1="432.0" x2="539.1" y2="430.8" stroke="#2fe02f" stroke-width="0.68" stroke-opacity="0.94"/>
<line x1="547.2" y1="429.4" x2="536.9" y2="427.0" stroke="#2fe02f" stroke-width="0.70" stroke-opacity="0.87"/>
<line x1="543.5" y1="430.0" x2="529.8" y2="432.9" stroke="#2fe02f" stroke-width="0.75" stroke-opacity="0.65"/>
<line x1="543.8" y1="429.9" x2="530.0" y2="431.7" stroke="#2fe02f" stroke-width="0.60" stroke-opacity="0.71"/>
<line x1="546.5" y1="434.4" x2="537.0" y2="436.0" stroke="#2fe02f" stroke-width="0.82" stroke-opacity="0.62"/>
<line x1="544.2" y1="430.3" x2="530.9" y2="431.1" stroke="#2fe02f" stroke-width="0.67" stroke-opacity="0.84"/>
<line x1="547.5" y1="430.5" x2="537.9" y2="431.6" stroke="#2fe02f" stroke-width="0.83" stroke-opacity="0.73"/>
<line x1="543.7" y1="432.0" x2="524.1" y2="428.2" stroke="#2fe02f" stroke-width="0.89" stroke-opacity="0.67"/>
<line x1="546.3" y1="429.2" x2="535.2" y2="426.8" stroke="#2fe02f" stroke-width="0.95" stroke-opacity="0.76"/>
<line x1="540.8" y1="427.6" x2="528.0" y2="430.9" stroke="#2fe02f" stroke-width="0.64" stroke-opacity="0.82"/>
<line x1="544.2" y1="433.4" x2="537.1" y2="433.4" stroke="#2fe02f" stroke-width="0.97" stroke-opacity="0.64"/>
<line x1="545.5" y1="432.0" x2="526.3" y2="428.9" stroke="#2fe02f" stroke-width="0.98" stroke-opacity="0.94"/>
<line x1="540.0" y1="433.8" x2="521.7" y2="438.2" stroke="#2fe02f" stroke-width="0.85" stroke-opacity="0.89"/>
<line x1="540.2" y1="433.2" x2="532.0" y2="431.9" stroke="#2fe02f" stroke-width="0.93" stroke-opacity="0.66"/>
<line x1="546.9" y1="431.7" x2="557.1" y2="431.1" stroke="#2fe02f" stroke-width="0.70" stroke-opacity="0.85"/>
<line x1="548.0" y1="430.4" x2="558.5" y2="427.9" stroke="#2fe02f" stroke-width="0.94" stroke-opacity="0.64"/>
<line x1="546.9" y1="433.0" x2="558.4" y2="433.3" stroke="#2fe02f" stroke-width="0.83" stroke-opacity="0.75"/>
<line x1="552.1" y1="431.4" x2="561.4" y2="431.1" stroke="#2fe02f" stroke-width="0.80" stroke-opacity="0.68"/>
<line x1="549.5" y1="433.0" x2="558.9" y2="434.4" stroke="#2fe02f" stroke-width="0.64" stroke-opacity="0.64"/>
<line x1="547.1" y1="431.0" x2="556.2" y2="429.0" stroke="#2fe02f" stroke-width="0.85" stroke-opacity="0.63"/>
<line x1="551.3" y1="431.8" x2="561.4" y2="433.3" stroke="#2fe02f" stroke-width="0.75" stroke-opacity="0.93"/>
<line x1="547.4" y1="427.3" x2="563.1" y2="430.3" stroke="#2fe02f" stroke-width="0.68" stroke-opacity="0.94"/>
<line x1="550.7" y1="434.0" x2="565.3" y2="437.6" stroke="#2fe02f" stroke-width="0.97" stroke-opacity="0.62"/>
<line x1="549.9" y1="430.0" x2="555.8" y2="430.8" stroke="#2fe02f" stroke-width="0.93" stroke-opacity="0.65"/>
<line x1="547.7" y1="433.4" x2="554.1" y2="434.8" stroke="#2fe02f" stroke-width="0.73" stroke-opacity="0.61"/>
<line x1="545.3" y1="427.2" x2="560.3" y2="424.5" stroke="#2fe02f" stroke-width="0.67" stroke-opacity="0.87"/>
<line x1="542.6" y1="436.1" x2="542.4" y2="449.9" stroke="#2a2ae0" stroke-width="0.98" stroke-opacity="0.80"/>
<line x1="544.4" y1="431.5" x2="547.9" y2="448.1" stroke="#2a2ae0" stroke-width="1.10" stroke-opacity="0.69"/>
<line x1="546.8" y1="430.8" x2="546.3" y2="442.1" stroke="#2a2ae0" stroke-width="0.79" stroke-opacity="0.86"/>
<line x1="541.0" y1="428.6" x2="539.3" y2="438.7" stroke="#2a2ae0" stroke-width="0.99" stroke-opacity="0.83"/>
<line x1="549.0" y1="435.2" x2="551.1" y2="443.3" stroke="#2a2ae0" stroke-width="0.92" stroke-opacity="0.78"/>
<line x1="546.1" y1="432.7" x2="548.1" y2="442.5" stroke="#2a2ae0" stroke-width="0.70" stroke-opacity="0.72"/>
<line x1="543.0" y1="431.7" x2="543.8" y2="441.7" stroke="#2a2ae0" stroke-width="0.80" stroke-opacity="0.82"/>
<line x1="546.6" y1="434.1" x2="549.7" y2="450.3" stroke="#2a2ae0" stroke-width="0.75" stroke-opacity="0.82"/>
<line x1="546.5" y1="433.3" x2="544.7" y2="444.8" stroke="#2a2ae0" stroke-width="1.02" stroke-opacity="0.80"/>
<line x1="551.0" y1="431.7" x2="550.1" y2="443.7" stroke="#2a2ae0" stroke-width="0.82" stroke-opacity="0.92"/>
<line x1="546.6" y1="433.7" x2="546.4" y2="445.3" stroke="#2a2ae0" stroke-width="1.09" stroke-opacity="0.60"/>
<line x1="547.8" y1="435.6" x2="545.7" y2="444.6" stroke="#2a2ae0" stroke-width="0.95" stroke-opacity="0.82"/>
<line x1="546.2" y1="433.6" x2="548.0" y2="444.2" stroke="#2a2ae0" stroke-width="1.14" stroke-opacity="0.87"/>
<line x1="546.4" y1="430.8" x2="550.4" y2="445.8" stroke="#2a2ae0" stroke-width="1.07" stroke-opacity="0.76"/>
<line x1="549.1" y1="433.4" x2="551.2" y2="443.3" stroke="#2a2ae0" stroke-width="1.07" stroke-opacity="0.84"/>
<line x1="543.5" y1="432.3" x2="542.3" y2="442.6" stroke="#2a2ae0" stroke-width="1.09" stroke-opacity="0.78"/>
<line x1="547.8" y1="437.0" x2="546.5" y2="453.7" stroke="#2a2ae0" stroke-width="0.71" stroke-opacity="0.69"/>
<line x1="546.4" y1="431.2" x2="544.3" y2="447.6" stroke="#2a2ae0" stroke-width="1.14" stroke-opacity="0.71"/>
<line x1="545.4" y1="429.2" x2="540.2" y2="440.3" stroke="#ee2a2a" stroke-width="0.89" stroke-opacity="0.76"/>
<line x1="542.6" y1="433.2" x2="538.8" y2="447.3" stroke="#ee2a2a" stroke-width="0.73" stroke-opacity="0.71"/>
<line x1="548.4" y1="431.4" x2="547.1" y2="438.1" stroke="#ee2a2a" stroke-width="0.51" stroke-opacity="0.64"/>
<line x1="547.9" y1="432.1" x2="548.2" y2="439.5" stroke="#ee2a2a" stroke-width="0.78" stroke-opacity="0.82"/>
<line x1="544.6" y1="431.0" x2="542.7" y2="437.3" stroke="#ee2a2a" stroke-width="0.83" stroke-opacity="0.89"/>
<line x1="553.2" y1="429.5" x2="557.4" y2="443.6" stroke="#ee2a2a" stroke-width="0.54" stroke-opacity="0.67"/>
<line x1="548.6" y1="429.4" x2="553.2" y2="443.1" stroke="#ee2a2a" stroke-width="0.83" stroke-opacity="0.82"/>
<line x1="547.1" y1="430.6" x2="548.9" y2="437.4" stroke="#ee2a2a" stroke-width="0.63" stroke-opacity="0.75"/>
<line x1="546.4" y1="430.1" x2="547.5" y2="438.9" stroke="#ee2a2a" stroke-width="0.63" stroke-opacity="0.94"/>
<line x1="550.0" y1="432.4" x2="545.4" y2="443.6" stroke="#ee2a2a" stroke-width="0.67" stroke-opacity="0.87"/>
<line x1="547.2" y1="433.9" x2="531.0" y2="430.7" stroke="#b8a020" stroke-width="0.53" stroke-opacity="0.89"/>
<line x1="546.6" y1="424.5" x2="535.6" y2="426.4" stroke="#b8a020" stroke-width="0.50" stroke-opacity="0.77"/>
<line x1="543.2" y1="430.1" x2="532.6" y2="427.4" stroke="#b8a020" stroke-width="0.75" stroke-opacity="0.69"/>
<line x1="544.9" y1="427.8" x2="533.5" y2="428.1" stroke="#b8a020" stroke-width="0.53" stroke-opacity="0.82"/>
<line x1="547.0" y1="427.3" x2="528.4" y2="422.7" stroke="#b8a020" stroke-width="0.61" stroke-opacity="0.74"/>
<line x1="546.5" y1="429.7" x2="537.5" y2="427.0" stroke="#b8a020" stroke-width="0.56" stroke-opacity="0.69"/>
<line x1="547.6" y1="429.0" x2="533.6" y2="427.8" stroke="#b8a020" stroke-width="0.64" stroke-opacity="0.79"/>
<line x1="544.5" y1="431.4" x2="526.6" y2="427.5" stroke="#b8a020" stroke-width="0.55" stroke-opacity="0.90"/>
<line x1="541.0" y1="409.0" x2="541.5" y2="430.0" stroke="#e04646" stroke-width="0.60" stroke-opacity="0.85"/>
<line x1="548.0" y1="407.0" x2="549.0" y2="430.0" stroke="#e04646" stroke-width="0.60" stroke-opacity="0.85"/>
<line x1="533.0" y1="412.0" x2="534.0" y2="431.0" stroke="#7a7a30" stroke-width="0.60" stroke-opacity="0.85"/>
<text x="532.6" y="415.9" font-size="5.9" fill="#a84810" textLength="12.6" lengthAdjust="spacingAndGlyphs">P192</text>
<text x="524.3" y="405.5" font-size="5.9" fill="#a07010" textLength="12.6" lengthAdjust="spacingAndGlyphs">P196</text>
<line x1="522.0" y1="402.0" x2="541.0" y2="400.5" stroke="#8aa020" stroke-width="0.60" stroke-opacity="0.85"/>
<line x1="552.0" y1="433.0" x2="566.0" y2="432.0" stroke="#111" stroke-width="1.20" stroke-opacity="0.85"/>
<line x1="701.2" y1="307.3" x2="705.1" y2="310.2" stroke="#d020d0" stroke-width="1.46" stroke-opacity="0.64"/>
<line x1="706.9" y1="307.6" x2="710.3" y2="311.5" stroke="#d020d0" stroke-width="1.56" stroke-opacity="0.90"/>
<line x1="704.3" y1="308.2" x2="709.3" y2="306.7" stroke="#d020d0" stroke-width="1.13" stroke-opacity="0.71"/>
<line x1="712.2" y1="309.1" x2="716.2" y2="315.5" stroke="#d020d0" stroke-width="1.08" stroke-opacity="0.73"/>
<line x1="704.2" y1="306.5" x2="709.9" y2="311.6" stroke="#d020d0" stroke-width="1.51" stroke-opacity="0.64"/>
<line x1="701.7" y1="308.1" x2="705.9" y2="308.5" stroke="#d020d0" stroke-width="1.55" stroke-opacity="0.78"/>
<line x1="703.6" y1="304.8" x2="708.2" y2="305.7" stroke="#d020d0" stroke-width="1.59" stroke-opacity="0.92"/>
<line x1="704.1" y1="306.7" x2="711.3" y2="309.5" stroke="#d020d0" stroke-width="1.58" stroke-opacity="0.91"/>
<line x1="704.2" y1="303.4" x2="711.1" y2="307.9" stroke="#d020d0" stroke-width="1.36" stroke-opacity="0.71"/>
<line x1="707.0" y1="302.9" x2="712.6" y2="300.7" stroke="#d020d0" stroke-width="1.50" stroke-opacity="0.69"/>
<line x1="700.2" y1="308.6" x2="693.4" y2="310.6" stroke="#2a2ae0" stroke-width="1.36" stroke-opacity="0.66"/>
<line x1="695.9" y1="307.3" x2="696.9" y2="301.5" stroke="#2a2ae0" stroke-width="0.82" stroke-opacity="0.79"/>
<line x1="702.6" y1="306.9" x2="704.4" y2="298.4" stroke="#2a2ae0" stroke-width="1.14" stroke-opacity="0.79"/>
<line x1="705.7" y1="304.9" x2="698.6" y2="304.3" stroke="#2a2ae0" stroke-width="1.05" stroke-opacity="0.93"/>
<line x1="704.1" y1="306.0" x2="701.7" y2="300.5" stroke="#2a2ae0" stroke-width="1.39" stroke-opacity="0.72"/>
<line x1="707.1" y1="307.2" x2="706.2" y2="313.1" stroke="#2a2ae0" stroke-width="1.05" stroke-opacity="0.84"/>
<line x1="703.6" y1="302.3" x2="703.1" y2="307.4" stroke="#2a2ae0" stroke-width="1.12" stroke-opacity="0.68"/>
<line x1="707.6" y1="309.5" x2="703.6" y2="312.7" stroke="#2a2ae0" stroke-width="1.29" stroke-opacity="0.82"/>
<line x1="705.7" y1="303.6" x2="701.1" y2="298.2" stroke="#2fe02f" stroke-width="0.86" stroke-opacity="0.89"/>
<line x1="701.5" y1="303.7" x2="695.9" y2="298.5" stroke="#2fe02f" stroke-width="0.93" stroke-opacity="0.72"/>
<line x1="702.9" y1="306.1" x2="695.6" y2="302.1" stroke="#2fe02f" stroke-width="0.67" stroke-opacity="0.60"/>
<line x1="701.9" y1="306.2" x2="695.6" y2="302.6" stroke="#2fe02f" stroke-width="0.77" stroke-opacity="0.82"/>
<line x1="703.6" y1="303.5" x2="692.7" y2="295.7" stroke="#2fe02f" stroke-width="0.93" stroke-opacity="0.92"/>
<line x1="702.7" y1="303.7" x2="690.9" y2="299.5" stroke="#2fe02f" stroke-width="0.60" stroke-opacity="0.93"/>
<line x1="704.4" y1="305.1" x2="699.1" y2="302.4" stroke="#2fe02f" stroke-width="0.91" stroke-opacity="0.72"/>
<line x1="706.1" y1="307.7" x2="702.6" y2="296.1" stroke="#2fe02f" stroke-width="0.84" stroke-opacity="0.87"/>
<line x1="704.1" y1="302.9" x2="700.4" y2="291.3" stroke="#2fe02f" stroke-width="0.88" stroke-opacity="0.79"/>
<line x1="700.8" y1="303.5" x2="691.0" y2="295.0" stroke="#2fe02f" stroke-width="0.69" stroke-opacity="0.65"/>
<line x1="709.1" y1="310.8" x2="716.6" y2="314.4" stroke="#ee2a2a" stroke-width="0.80" stroke-opacity="0.79"/>
<line x1="703.2" y1="309.5" x2="713.4" y2="313.3" stroke="#ee2a2a" stroke-width="0.87" stroke-opacity="0.89"/>
<line x1="710.8" y1="310.3" x2="717.1" y2="320.2" stroke="#ee2a2a" stroke-width="0.85" stroke-opacity="0.61"/>
<line x1="702.9" y1="314.0" x2="704.6" y2="325.3" stroke="#ee2a2a" stroke-width="0.80" stroke-opacity="0.77"/>
<line x1="705.1" y1="307.7" x2="714.3" y2="311.6" stroke="#ee2a2a" stroke-width="0.94" stroke-opacity="0.73"/>
<line x1="707.8" y1="311.1" x2="711.8" y2="320.7" stroke="#ee2a2a" stroke-width="0.77" stroke-opacity="0.79"/>
<line x1="704.1" y1="310.3" x2="711.5" y2="318.2" stroke="#ee2a2a" stroke-width="0.71" stroke-opacity="0.78"/>
<line x1="705.7" y1="310.5" x2="707.8" y2="320.9" stroke="#ee2a2a" stroke-width="0.72" stroke-opacity="0.81"/>
<line x1="698.9" y1="287.9" x2="695.9" y2="293.5" stroke="#b0b020" stroke-width="0.66" stroke-opacity="0.62"/>
<line x1="703.6" y1="290.7" x2="709.6" y2="295.8" stroke="#b0b020" stroke-width="0.70" stroke-opacity="0.88"/>
<line x1="696.8" y1="289.8" x2="694.4" y2="301.7" stroke="#b0b020" stroke-width="0.68" stroke-opacity="0.84"/>
<line x1="700.1" y1="291.1" x2="697.1" y2="301.2" stroke="#b0b020" stroke-width="0.55" stroke-opacity="0.61"/>
<line x1="696.2" y1="294.7" x2="687.9" y2="304.1" stroke="#b0b020" stroke-width="0.74" stroke-opacity="0.80"/>
<line x1="698.7" y1="293.9" x2="702.1" y2="303.5" stroke="#b0b020" stroke-width="0.69" stroke-opacity="0.93"/>
<line x1="704.0" y1="294.5" x2="703.3" y2="300.8" stroke="#b0b020" stroke-width="0.67" stroke-opacity="0.92"/>
<line x1="694.1" y1="289.4" x2="701.5" y2="296.0" stroke="#b0b020" stroke-width="0.79" stroke-opacity="0.77"/>
<line x1="700.4" y1="293.1" x2="708.4" y2="302.7" stroke="#b0b020" stroke-width="0.50" stroke-opacity="0.60"/>
<line x1="705.1" y1="294.1" x2="714.8" y2="306.5" stroke="#b0b020" stroke-width="0.54" stroke-opacity="0.61"/>
<line x1="700.4" y1="292.6" x2="706.2" y2="304.6" stroke="#b0b020" stroke-width="0.73" stroke-opacity="0.85"/>
<line x1="696.7" y1="289.7" x2="694.1" y2="296.0" stroke="#b0b020" stroke-width="0.64" stroke-opacity="0.93"/>
<circle cx="704.5" cy="305.5" r="2.4" fill="#7a2ad0"/><circle cx="700.5" cy="306.3" r="1.8" fill="#2a2ae0"/><circle cx="704.5" cy="318.3" r="1.2" fill="#e83030"/>
<line x1="713.0" y1="299.0" x2="734.0" y2="297.5" stroke="#2fe02f" stroke-width="1.00" stroke-opacity="0.85"/>
<line x1="706.0" y1="308.0" x2="713.0" y2="318.0" stroke="#e04646" stroke-width="0.80" stroke-opacity="0.85"/>
<line x1="706.0" y1="278.0" x2="690.0" y2="293.0" stroke="#4fd04f" stroke-width="0.70" stroke-opacity="0.85"/>
<line x1="569.5" y1="452.0" x2="567.5" y2="470.0" stroke="#e02020" stroke-width="1.20" stroke-opacity="0.85"/>
<line x1="581.0" y1="452.0" x2="579.0" y2="468.0" stroke="#e06060" stroke-width="0.80" stroke-opacity="0.85"/>
<line x1="568.0" y1="470.0" x2="580.0" y2="456.0" stroke="#5050d0" stroke-width="0.70" stroke-opacity="0.85"/>
<line x1="565.0" y1="481.0" x2="578.0" y2="466.0" stroke="#5050d0" stroke-width="0.70" stroke-opacity="0.85"/>
<line x1="563.0" y1="484.0" x2="572.0" y2="474.0" stroke="#5050d0" stroke-width="0.70" stroke-opacity="0.85"/>
<line x1="570.0" y1="476.0" x2="584.0" y2="477.0" stroke="#2fe02f" stroke-width="0.90" stroke-opacity="0.85"/>
<line x1="586.0" y1="471.0" x2="596.0" y2="470.0" stroke="#1a1a1a" stroke-width="2.20" stroke-opacity="0.85"/>
<line x1="586.0" y1="479.0" x2="597.0" y2="478.5" stroke="#1a1a1a" stroke-width="2.00" stroke-opacity="0.85"/>
<rect x="583" y="464.5" width="4" height="6" fill="#e02020"/>
<text x="579.5" y="458.4" font-size="5.9" fill="#566" textLength="12.6" lengthAdjust="spacingAndGlyphs">P253</text>
<text x="590.0" y="483.9" font-size="5.9" fill="#3a4a20" textLength="12.6" lengthAdjust="spacingAndGlyphs">P264</text>
<text x="589.0" y="464.4" font-size="5.9" fill="#444" textLength="12.6" lengthAdjust="spacingAndGlyphs">P263</text>
<text x="486.5" y="382.7" font-size="5.9" fill="#444" textLength="12.6" lengthAdjust="spacingAndGlyphs">P212</text>
<line x1="486.0" y1="381.0" x2="486.0" y2="390.0" stroke="#4a4ac8" stroke-width="0.60" stroke-opacity="0.85"/>
<line x1="481.0" y1="360.0" x2="486.0" y2="378.0" stroke="#e04646" stroke-width="0.50" stroke-opacity="0.60"/>
<text x="703.5" y="398.4" font-size="5.9" fill="#6a4a30" textLength="12.6" lengthAdjust="spacingAndGlyphs">P232</text>
<line x1="703.0" y1="397.0" x2="702.5" y2="413.0" stroke="#4a4ac8" stroke-width="0.60" stroke-opacity="0.60"/>
<text x="673.0" y="405.4" font-size="5.9" fill="#667" textLength="12.6" lengthAdjust="spacingAndGlyphs">P231</text>
<line x1="673.0" y1="404.0" x2="669.0" y2="419.0" stroke="#4a4ac8" stroke-width="0.60" stroke-opacity="0.60"/>
</svg>
<svg id="ui" width="1024" height="503" viewBox="0 0 1024 503">
<rect x="0.0" y="0.0" width="1024.0" height="54.2" fill="#2a2a2a" />
<rect x="0.0" y="0.0" width="1024.0" height="20.0" fill="#323232" />
<rect x="0.0" y="19.5" width="1024.0" height="0.7" fill="#393939" />
<rect x="0.0" y="20.2" width="1024.0" height="34.0" fill="#2a2a2a" />
<rect x="1.3" y="1.5" width="7.0" height="6.4" fill="#f4f4f4" />
<text x="3.2" y="7" font-size="5.5" fill="#555" font-weight="bold">S</text>
<rect x="12.8" y="1.4" width="7.4" height="6.3" fill="#dcdcdc" rx="0.6"/>
<rect x="14.5" y="1.4" width="4.0" height="2.4" fill="#3a3a3a" />
<rect x="14.3" y="5.0" width="4.4" height="2.7" fill="#3a3a3a" />
<polygon points="29.5,4.6 31.5,4.6 30.5,5.9" fill="#bbb" />
<rect x="0.0" y="10.2" width="21.9" height="10.0" fill="#2a7da3" />
<text x="4.8" y="17.21" font-size="5.30" fill="#fff" stroke="#fff" font-weight="normal" textLength="12.0" lengthAdjust="spacingAndGlyphs" >DATEI</text>
<text x="28.6" y="17.21" font-size="5.30" fill="#f2f2f2" stroke="#f2f2f2" font-weight="normal" textLength="12.7" lengthAdjust="spacingAndGlyphs" >START</text>
<text x="53.4" y="17.21" font-size="5.30" fill="#f2f2f2" stroke="#f2f2f2" font-weight="normal" textLength="35.0" lengthAdjust="spacingAndGlyphs" >MODELLIERUNG</text>
<text x="100.8" y="17.21" font-size="5.30" fill="#f2f2f2" stroke="#f2f2f2" font-weight="normal" textLength="27.2" lengthAdjust="spacingAndGlyphs" >PROGRAMM</text>
<text x="139.5" y="17.21" font-size="5.30" fill="#f2f2f2" stroke="#f2f2f2" font-weight="normal" textLength="26.7" lengthAdjust="spacingAndGlyphs" >ZEICHNUNG</text>
<text x="178.0" y="17.21" font-size="5.30" fill="#f2f2f2" stroke="#f2f2f2" font-weight="normal" textLength="12.0" lengthAdjust="spacingAndGlyphs" >HILFE</text>
<rect x="196.0" y="0.0" width="41.3" height="19.6" fill="#6a2a4e" />
<rect x="196.0" y="0.0" width="41.3" height="1.0" fill="#d02090" />
<text x="213.0" y="6.56" font-size="4.60" fill="#e8d8e4" stroke="#e8d8e4" font-weight="normal" textLength="7.5" lengthAdjust="spacingAndGlyphs" >KRL</text>
<text x="202.0" y="17.21" font-size="5.30" fill="#fff" stroke="#fff" font-weight="normal" textLength="29.2" lengthAdjust="spacingAndGlyphs" >PROGRAMME</text>
<rect x="237.6" y="0.0" width="26.4" height="10.2" fill="#26267c" />
<rect x="237.6" y="10.2" width="26.4" height="9.3" fill="#2c2c2c" />
<rect x="237.6" y="0.0" width="26.4" height="0.8" fill="#2222cc" />
<text x="243.5" y="6.56" font-size="4.60" fill="#e8e8ff" stroke="#e8e8ff" font-weight="normal" textLength="14.5" lengthAdjust="spacingAndGlyphs" >Aufbau</text>
<text x="244.0" y="17.10" font-size="5.00" fill="#4a5560" stroke="#4a5560" font-weight="normal" textLength="13.5" lengthAdjust="spacingAndGlyphs" >TOOLS</text>
<text x="441.5" y="6.80" font-size="5.00" fill="#9a9a9a" stroke="#9a9a9a" font-weight="normal" textLength="145.5" lengthAdjust="spacingAndGlyphs" >Arbeitsplatz_Schweißlabor_2024_fixed.vcmx - KUKA.Sim 4.3</text>
<rect x="999.0" y="4.3" width="4.2" height="0.8" fill="#b4b4b4" />
<rect x="1009.2" y="2.4" width="3.4" height="3.4" fill="#4a5a78" stroke="#6a86b8" stroke-width="0.7"/>
<path d="M1019,2.3 l3.6,3.6 m0,-3.6 l-3.6,3.6" stroke="#c8c8c8" stroke-width="0.8" fill="none"/>
<path d="M1006.2,17 l2.7,-2.8 l2.7,2.8" stroke="#f0f0f0" stroke-width="1.1" fill="none"/>
<circle cx="1018.8" cy="14.5" r="3.3" fill="#62b8ee"/><circle cx="1018.8" cy="14.5" r="1.8" fill="#a8dcf8"/>
<text x="1017.7" y="16.1" font-size="4.4" fill="#fff" font-weight="bold">?</text>
<rect x="6.3" y="22.2" width="12.5" height="12.5" fill="none" stroke="#e2b13c" stroke-width="0.8" stroke-dasharray="1.5 1.75 3 1.75 3 1.75 1.5 0"/>
<text x="2.3" y="41.46" font-size="4.90" fill="#f4f4f4" stroke="#f4f4f4" font-weight="normal" textLength="20.9" lengthAdjust="spacingAndGlyphs" >Auswählen</text>
<polygon points="11.2,44.0 13.6,44.0 12.4,45.7" fill="#f2f2f2" />
<g stroke="#3fb84c" fill="none" stroke-width="1.3"><circle cx="38.2" cy="28.3" r="2.7"/><path d="M38.2,23v2.6 M38.2,31v2.6 M32.9,28.3h2.6 M40.9,28.3h2.6" stroke-width="1.1"/></g>
<g fill="#3fb84c"><polygon points="38.2,22.2 36.4,24.6 40,24.6"/><polygon points="38.2,34.4 36.4,32 40,32"/><polygon points="32.1,28.3 34.5,26.5 34.5,30.1"/><polygon points="44.3,28.3 41.9,26.5 41.9,30.1"/></g>
<text x="27.0" y="41.06" font-size="4.90" fill="#f4f4f4" stroke="#f4f4f4" font-weight="normal" textLength="22.9" lengthAdjust="spacingAndGlyphs" >Verschieben</text>
<path d="M65.4,29.3 v-5.2 a0.9,0.9 0 0 1 1.8,0 v3.2 l2.6,0.5 a1.2,1.2 0 0 1 1,1.2 v2.3 l-0.8,2.6 h-4.6 l-2.4,-3.6 a0.8,0.8 0 0 1 1.2,-1 z" stroke="#ececec" stroke-width="0.55" fill="#2a2a2a" transform="translate(66.8,29) scale(1.18) translate(-66.8,-29)"/>
<path d="M62.3,24.8 l1.2,0.6 M69.8,24.8 l-1.2,0.6 M66.1,22.6 v-1" stroke="#3cb54a" stroke-width="0.6"/>
<text x="54.1" y="41.06" font-size="4.90" fill="#f4f4f4" stroke="#f4f4f4" font-weight="normal" textLength="23.8" lengthAdjust="spacingAndGlyphs" >Interagieren</text>
<rect x="79.9" y="21.9" width="19.1" height="24.9" fill="#2b84a8" />
<path d="M88.6,29.3 v-5.2 a0.9,0.9 0 0 1 1.8,0 v3.2 l2.6,0.5 a1.2,1.2 0 0 1 1,1.2 v2.3 l-0.8,2.6 h-4.6 l-2.4,-3.6 a0.8,0.8 0 0 1 1.2,-1 z" stroke="#e4f6ff" stroke-width="0.55" fill="#2b84a8" transform="translate(90,29) scale(1.18) translate(-90,-29)"/>
<text x="86.1" y="41.26" font-size="4.90" fill="#fff" stroke="#fff" font-weight="normal" textLength="6.8" lengthAdjust="spacingAndGlyphs" >Jog</text>
<text x="37.5" y="52.99" font-size="4.70" fill="#d6d6d6" stroke="#d6d6d6" font-weight="normal" textLength="25.5" lengthAdjust="spacingAndGlyphs" >Manipulation</text>
<rect x="101.5" y="22.0" width="0.6" height="30.0" fill="#383838" />
<polygon points="110.0,25.5 110.8,25.8 110.6,26.6 109.8,26.6 109.4,27.2 109.7,27.9 109.1,28.4 108.5,27.8 107.8,27.9 107.5,28.7 106.7,28.5 106.7,27.7 106.1,27.3 105.4,27.6 104.9,27.0 105.5,26.4 105.4,25.7 104.6,25.4 104.8,24.6 105.6,24.6 106.0,24.0 105.7,23.3 106.3,22.8 106.9,23.4 107.6,23.3 107.9,22.5 108.7,22.7 108.7,23.5 109.3,23.9 110.0,23.6 110.5,24.2 109.9,24.8" fill="#f0b429" stroke="#f0b429" stroke-width="0.3" stroke-linejoin="round"/><circle cx="107.7" cy="25.6" r="1.24" fill="#2a2a2a"/>
<text x="113.0" y="27.66" font-size="4.90" fill="#f4f4f4" stroke="#f4f4f4" font-weight="normal" textLength="60.7" lengthAdjust="spacingAndGlyphs" >Kollisionserkennung bearbeiten</text>
<rect x="105.2" y="31.4" width="6.2" height="6.2" fill="#2a2a2a" stroke="#bdbdbd" stroke-width="0.6"/>
<text x="113.0" y="36.16" font-size="4.90" fill="#f4f4f4" stroke="#f4f4f4" font-weight="normal" textLength="59.0" lengthAdjust="spacingAndGlyphs" >Kollisionserkennung aktivieren</text>
<rect x="105.2" y="40.0" width="6.2" height="6.2" fill="#2a2a2a" stroke="#bdbdbd" stroke-width="0.6"/>
<text x="113.0" y="44.76" font-size="4.90" fill="#f4f4f4" stroke="#f4f4f4" font-weight="normal" textLength="37.0" lengthAdjust="spacingAndGlyphs" >Stopp bei Kollision</text>
<rect x="177.2" y="22.8" width="6.2" height="6.2" fill="#2a2a2a" stroke="#bdbdbd" stroke-width="0.6"/>
<text x="185.7" y="27.76" font-size="4.90" fill="#f4f4f4" stroke="#f4f4f4" font-weight="normal" textLength="31.5" lengthAdjust="spacingAndGlyphs" >Workspace Only</text>
<rect x="177.2" y="31.4" width="6.2" height="6.2" fill="#2a2a2a" stroke="#bdbdbd" stroke-width="0.6"/>
<text x="185.7" y="36.26" font-size="4.90" fill="#f4f4f4" stroke="#f4f4f4" font-weight="normal" textLength="44.2" lengthAdjust="spacingAndGlyphs" >Collision Free Planning</text>
<text x="150.5" y="52.99" font-size="4.70" fill="#d6d6d6" stroke="#d6d6d6" font-weight="normal" textLength="34.0" lengthAdjust="spacingAndGlyphs" >Kollisionsprüfung</text>
<rect x="232.6" y="22.0" width="0.6" height="30.0" fill="#383838" />
<text x="238.8" y="33.9" font-size="15" fill="#eab320" font-weight="bold" style="font-family:'Liberation Serif',serif;stroke:none" textLength="9" lengthAdjust="spacingAndGlyphs">T</text>
<path d="M247.8,26.2h4.8 M247.8,28.6h4.8 M247.8,30.9h4.8 M247.8,33.2h4.8" stroke="#eab320" stroke-width="0.9"/>
<text x="237.0" y="40.56" font-size="4.90" fill="#f4f4f4" stroke="#f4f4f4" font-weight="normal" textLength="18.0" lengthAdjust="spacingAndGlyphs" >Generate</text>
<text x="241.7" y="46.16" font-size="4.90" fill="#f4f4f4" stroke="#f4f4f4" font-weight="normal" textLength="7.6" lengthAdjust="spacingAndGlyphs" >Text</text>
<polygon points="277.9,28.0 279.7,28.6 279.3,30.3 277.5,30.1 276.7,31.3 277.5,33.0 276.1,34.0 274.9,32.5 273.5,32.8 272.9,34.6 271.2,34.2 271.4,32.4 270.2,31.6 268.5,32.4 267.5,31.0 269.0,29.8 268.7,28.4 266.9,27.8 267.3,26.1 269.1,26.3 269.9,25.1 269.1,23.4 270.5,22.4 271.7,23.9 273.1,23.6 273.7,21.8 275.4,22.2 275.2,24.0 276.4,24.8 278.1,24.0 279.1,25.4 277.6,26.6" fill="#f6f6f6" stroke="#f6f6f6" stroke-width="0.3" stroke-linejoin="round"/>
<polygon points="271.8,25.8 271.8,30.6 275.6,28.2" fill="#2a2a2a" />
<text x="258.0" y="40.56" font-size="4.90" fill="#f4f4f4" stroke="#f4f4f4" font-weight="normal" textLength="30.5" lengthAdjust="spacingAndGlyphs" >Generate Robot</text>
<text x="263.7" y="46.16" font-size="4.90" fill="#f4f4f4" stroke="#f4f4f4" font-weight="normal" textLength="17.3" lengthAdjust="spacingAndGlyphs" >Program</text>
<polygon points="304.9,22.1 311.0,28.2 304.9,34.3 298.8,28.2" fill="none" stroke="#f4f4f4" stroke-width="1.1"/>
<path d="M303,31h3.8 M304.4,31v-2.6 q-1.6,-2.4 1.6,-3.2 M303.4,28.6h2.6" stroke="#f4f4f4" stroke-width="0.8" fill="none"/>
<text x="291.7" y="40.96" font-size="4.90" fill="#f4f4f4" stroke="#f4f4f4" font-weight="normal" textLength="26.3" lengthAdjust="spacingAndGlyphs" >Path Planning</text>
<text x="298.0" y="46.26" font-size="4.90" fill="#f4f4f4" stroke="#f4f4f4" font-weight="normal" textLength="13.0" lengthAdjust="spacingAndGlyphs" >Wizard</text>
<polygon points="325.9,25.7 326.7,26.0 326.5,26.8 325.7,26.8 325.3,27.4 325.6,28.1 325.0,28.6 324.4,28.0 323.7,28.1 323.4,28.9 322.6,28.7 322.6,27.9 322.0,27.5 321.3,27.8 320.8,27.2 321.4,26.6 321.3,25.9 320.5,25.6 320.7,24.8 321.5,24.8 321.9,24.2 321.6,23.5 322.2,23.0 322.8,23.6 323.5,23.5 323.8,22.7 324.6,22.9 324.6,23.7 325.2,24.1 325.9,23.8 326.4,24.4 325.8,25.0" fill="#f0b429" stroke="#f0b429" stroke-width="0.3" stroke-linejoin="round"/><circle cx="323.6" cy="25.8" r="1.24" fill="#2a2a2a"/>
<text x="328.5" y="27.76" font-size="4.90" fill="#f4f4f4" stroke="#f4f4f4" font-weight="normal" textLength="18.2" lengthAdjust="spacingAndGlyphs" >Optionen</text>
<path d="M322.3,33 a2,2 0 1 1 0.8,2.6 M322.3,33 l-0.6,-1.8 M322.3,33 l1.9,-0.3" stroke="#555" stroke-width="0.7" fill="none"/>
<text x="328.5" y="35.56" font-size="4.90" fill="#505050" stroke="#505050" font-weight="normal" textLength="10.0" lengthAdjust="spacingAndGlyphs" >Undo</text>
<text x="277.2" y="52.99" font-size="4.70" fill="#d6d6d6" stroke="#d6d6d6" font-weight="normal" textLength="29.5" lengthAdjust="spacingAndGlyphs" >Robot Program</text>
<rect x="349.5" y="22.0" width="0.6" height="30.0" fill="#383838" />
<rect x="356.6" y="22.6" width="6.2" height="6.2" fill="#2a2a2a" stroke="#bdbdbd" stroke-width="0.6"/>
<text x="365.2" y="27.76" font-size="4.90" fill="#f4f4f4" stroke="#f4f4f4" font-weight="normal" textLength="18.3" lengthAdjust="spacingAndGlyphs" >Add Floor</text>
<text x="352.2" y="52.99" font-size="4.70" fill="#d6d6d6" stroke="#d6d6d6" font-weight="normal" textLength="35.8" lengthAdjust="spacingAndGlyphs" >Modelling Helpers</text>
<rect x="389.5" y="22.0" width="0.6" height="30.0" fill="#383838" />
<rect x="393.2" y="22.8" width="5.8" height="5.8" fill="#e9d9a0" rx="0.5"/><rect x="394.4" y="22.8" width="3.2" height="2.0" fill="#2d2d2d" /><rect x="394.2" y="26.1" width="3.8" height="2.5" fill="#2d2d2d" />
<text x="401.0" y="27.76" font-size="4.90" fill="#f4f4f4" stroke="#f4f4f4" font-weight="normal" textLength="29.5" lengthAdjust="spacingAndGlyphs" >Create Urdf File</text>
<rect x="393.2" y="31.1" width="5.8" height="5.8" fill="#e9d9a0" rx="0.5"/><rect x="394.4" y="31.1" width="3.2" height="2.0" fill="#2d2d2d" /><rect x="394.2" y="34.4" width="3.8" height="2.5" fill="#2d2d2d" />
<text x="401.0" y="35.76" font-size="4.90" fill="#f4f4f4" stroke="#f4f4f4" font-weight="normal" textLength="27.0" lengthAdjust="spacingAndGlyphs" >Save Protobuf</text>
<text x="394.0" y="52.99" font-size="4.70" fill="#d6d6d6" stroke="#d6d6d6" font-weight="normal" textLength="36.2" lengthAdjust="spacingAndGlyphs" >Data Management</text>
<rect x="433.3" y="22.0" width="0.6" height="30.0" fill="#383838" />
<rect x="437.4" y="24.6" width="4.2" height="3.6" fill="none" stroke="#ddd" stroke-width="0.7"/><circle cx="441.6" cy="23.8" r="1.2" fill="none" stroke="#ddd" stroke-width="0.6"/>
<text x="444.7" y="27.76" font-size="4.90" fill="#f4f4f4" stroke="#f4f4f4" font-weight="normal" textLength="53.3" lengthAdjust="spacingAndGlyphs" >Backend Data Management</text>
<rect x="437.4" y="31.4" width="5.2" height="5.4" fill="none" stroke="#ddd" stroke-width="0.7"/><rect x="437.4" y="31.4" width="5.2" height="1.4" fill="#ddd" />
<text x="444.7" y="35.76" font-size="4.90" fill="#f4f4f4" stroke="#f4f4f4" font-weight="normal" textLength="53.3" lengthAdjust="spacingAndGlyphs" >Show Backend Environment</text>
<text x="451.7" y="52.99" font-size="4.70" fill="#d6d6d6" stroke="#d6d6d6" font-weight="normal" textLength="33.0" lengthAdjust="spacingAndGlyphs" >Backend Services</text>
<rect x="501.5" y="22.0" width="0.6" height="30.0" fill="#383838" />
<rect x="0.0" y="54.2" width="221.5" height="449.0" fill="#2b2b2b" />
<rect x="0.0" y="54.2" width="221.5" height="12.6" fill="#333333" />
<text x="2.8" y="63.42" font-size="7.00" fill="#e4e4e4" stroke="#e4e4e4" font-weight="normal" textLength="49.1" lengthAdjust="spacingAndGlyphs" >Programm-Editor</text>
<path d="M197.4,58.9h2.2v2.9h-2.2z" fill="#f4f4f4"/><path d="M196.8,61.9h3.4 M198.5,61.9v1.9" stroke="#f4f4f4" stroke-width="0.9" fill="none"/>
<path d="M208.4,58.8 l4.2,4.2 m0,-4.2 l-4.2,4.2" stroke="#f4f4f4" stroke-width="1.1" fill="none"/>
<rect x="0.0" y="67.3" width="221.5" height="10.2" fill="#4b4b4b" />
<circle cx="4.4" cy="72.5" r="3.2" fill="#3c3c3c" stroke="#777" stroke-width="0.6"/><path d="M3,73.2 l1.4,-1.4 l1.4,1.4" stroke="#999" stroke-width="0.6" fill="none"/>
<rect x="10.0" y="69.0" width="5.6" height="7.0" fill="#3a4a3a" stroke="#9fc79f" stroke-width="0.7" rx="0.8"/>
<path d="M11.5,70.8h2.6v3.6" stroke="#cfe8cf" stroke-width="0.6" fill="none"/>
<text x="17.8" y="74.62" font-size="5.60" fill="#fff" stroke="#fff" font-weight="bold" textLength="32.8" lengthAdjust="spacingAndGlyphs" >AuroraDemo</text>
<polygon points="218.0,72.5 218.8,72.8 218.6,73.6 217.7,73.6 217.3,74.2 217.7,75.0 217.0,75.5 216.4,74.8 215.7,75.0 215.4,75.8 214.6,75.6 214.6,74.7 214.0,74.3 213.2,74.7 212.7,74.0 213.4,73.4 213.2,72.7 212.4,72.4 212.6,71.6 213.5,71.6 213.9,71.0 213.5,70.2 214.2,69.7 214.8,70.4 215.5,70.2 215.8,69.4 216.6,69.6 216.6,70.5 217.2,70.9 218.0,70.5 218.5,71.2 217.8,71.8" fill="#b4b4b4" stroke="#b4b4b4" stroke-width="0.3" stroke-linejoin="round"/><circle cx="215.6" cy="72.6" r="1.34" fill="#4b4b4b"/>
<rect x="218.7" y="54.2" width="2.8" height="449.0" fill="#2b2b2b" />
<path d="M3.2,81.2h3 M3.2,82.4h4 M3.2,83.6h3" stroke="#3fae3f" stroke-width="0.7"/>
<text x="10.8" y="84.10" font-size="5.00" fill="#e4e4e4" stroke="#e4e4e4" font-weight="normal" textLength="18.2" lengthAdjust="spacingAndGlyphs" >Program</text>
<polygon points="5.4,88.6 7.0,90.2 5.4,91.8 3.8,90.2" fill="#f0f0f0" />
<path d="M11.6,88.8h4 M11.6,90.3h4.6 M11.6,91.8h4" stroke="#3fae3f" stroke-width="0.7"/>
<text x="18.8" y="92.10" font-size="5.00" fill="#e4e4e4" stroke="#e4e4e4" font-weight="normal" textLength="12.0" lengthAdjust="spacingAndGlyphs" >Rippe</text>
<rect x="11.4" y="95.4" width="4.4" height="5.4" fill="none" stroke="#bbb" stroke-width="0.6" rx="0.6"/>
<text x="18.8" y="100.00" font-size="5.00" fill="#cfcfcf" stroke="#cfcfcf" font-weight="normal" textLength="17.2" lengthAdjust="spacingAndGlyphs" >AuroraD</text>
<rect x="11.4" y="103.2" width="4.4" height="5.4" fill="none" stroke="#bbb" stroke-width="0.6" rx="0.6"/>
<rect x="0.0" y="113.5" width="40.0" height="10.5" fill="#414541" />
<rect x="549.1" y="55.8" width="148.0" height="16.6" fill="#a8a8a8" />
<polygon points="559.3,63.3 560.0,63.6 559.9,64.3 559.1,64.2 558.8,64.7 559.1,65.4 558.5,65.7 558.1,65.2 557.5,65.3 557.2,66.0 556.5,65.9 556.6,65.1 556.1,64.8 555.4,65.1 555.1,64.5 555.6,64.1 555.5,63.5 554.8,63.2 554.9,62.5 555.7,62.6 556.0,62.1 555.7,61.4 556.3,61.1 556.7,61.6 557.3,61.5 557.6,60.8 558.3,60.9 558.2,61.7 558.7,62.0 559.4,61.7 559.7,62.3 559.2,62.7" fill="#f4f4f4" stroke="#f4f4f4" stroke-width="0.3" stroke-linejoin="round"/><circle cx="557.4" cy="63.4" r="0.94" fill="#a8a8a8"/>
<polygon points="556.6,68.0 558.2,68.0 557.4,69.0" fill="#f4f4f4" />
<circle cx="572.4" cy="64.4" r="4.8" fill="none" stroke="#e6e6e6" stroke-width="0.6"/><circle cx="587" cy="64.4" r="4.8" fill="none" stroke="#e6e6e6" stroke-width="0.6"/>
<polygon points="585.4,61.8 585.4,67.0 590.0,64.4" fill="#fff" />
<polygon points="572.4,62.0 572.4,66.8 569.8,64.4" fill="#fff" /><polygon points="575.0,62.0 575.0,66.8 572.4,64.4" fill="#fff" /><rect x="569.2" y="62.0" width="0.8" height="4.8" fill="#fff" />
<text x="598.0" y="65.98" font-size="4.40" fill="#b4b4b4" stroke="#b4b4b4" font-weight="normal" textLength="13.0" lengthAdjust="spacingAndGlyphs" >x 1.0</text>
<rect x="624.0" y="64.1" width="19.0" height="0.6" fill="#b8b8b8" /><rect x="643.0" y="64.0" width="13.0" height="0.8" fill="#f0f0f0" /><rect x="642.8" y="62.0" width="0.8" height="4.6" fill="#f0f0f0" />
<rect x="667.6" y="61.6" width="4.4" height="6.0" fill="none" stroke="#e0e0e0" stroke-width="0.6"/><rect x="669.4" y="61.6" width="0.5" height="6.0" fill="#e0e0e0" />
<rect x="675.0" y="62.8" width="5.0" height="3.4" fill="#f4f4f4" /><polygon points="680.0,64.4 682.0,63.0 682.0,66.0" fill="#f4f4f4" />
<path d="M685.4,61.8 l2,5 l2.2,-5 M687.4,61.8v2" stroke="#f4f4f4" stroke-width="0.9" fill="none"/>
</svg>
<div id="card"><div id="cardin">
<svg width="350" height="400" viewBox="0 0 350 400" style="left:-8px;top:-103px"><defs><radialGradient id="cg" cx="0.85" cy="0.85" r="0.9"><stop offset="0" stop-color="#0a1a3e"/><stop offset="0.5" stop-color="#081634"/><stop offset="1" stop-color="#06122c"/></radialGradient><filter id="bl" x="-50%" y="-50%" width="200%" height="200%"><feGaussianBlur stdDeviation="1.2"/></filter></defs>
<rect x="0" y="95" width="350" height="295" fill="url(#cg)"/>
<line x1="300.2" y1="229.4" x2="328.5" y2="248.3" stroke="#8aa0c8" stroke-opacity="0.2" stroke-width="0.6"/>
<line x1="300.2" y1="229.4" x2="301.3" y2="312.7" stroke="#8aa0c8" stroke-opacity="0.2" stroke-width="0.6"/>
<line x1="328.5" y1="248.3" x2="301.3" y2="312.7" stroke="#8aa0c8" stroke-opacity="0.2" stroke-width="0.6"/>
<line x1="301.3" y1="312.7" x2="236.0" y2="321.7" stroke="#8aa0c8" stroke-opacity="0.2" stroke-width="0.6"/>
<line x1="236.0" y1="321.7" x2="211.5" y2="258.5" stroke="#8aa0c8" stroke-opacity="0.2" stroke-width="0.6"/>
<line x1="236.0" y1="321.7" x2="206.4" y2="339.7" stroke="#8aa0c8" stroke-opacity="0.2" stroke-width="0.6"/>
<line x1="236.0" y1="321.7" x2="220.0" y2="347.8" stroke="#8aa0c8" stroke-opacity="0.2" stroke-width="0.6"/>
<line x1="82.5" y1="351.3" x2="145.5" y2="345.3" stroke="#8aa0c8" stroke-opacity="0.2" stroke-width="0.6"/>
<line x1="145.5" y1="345.3" x2="170.0" y2="353.3" stroke="#8aa0c8" stroke-opacity="0.2" stroke-width="0.6"/>
<line x1="220.0" y1="347.8" x2="170.0" y2="353.3" stroke="#8aa0c8" stroke-opacity="0.2" stroke-width="0.6"/>
<line x1="328.5" y1="248.3" x2="345.0" y2="300.0" stroke="#8aa0c8" stroke-opacity="0.2" stroke-width="0.6"/>
<line x1="301.3" y1="312.7" x2="345.0" y2="300.0" stroke="#8aa0c8" stroke-opacity="0.2" stroke-width="0.6"/>
<line x1="236.0" y1="321.7" x2="260.0" y2="385.0" stroke="#8aa0c8" stroke-opacity="0.2" stroke-width="0.6"/>
<line x1="220.0" y1="347.8" x2="160.0" y2="380.0" stroke="#8aa0c8" stroke-opacity="0.2" stroke-width="0.6"/>
<line x1="301.3" y1="312.7" x2="260.0" y2="385.0" stroke="#8aa0c8" stroke-opacity="0.2" stroke-width="0.6"/>
<path d="M82.5,351.3 l-6,15 M82.5,351.3 l5,15 M82.5,351.3 l-3,-9" stroke="#8aa0c8" stroke-opacity="0.18" stroke-width="0.6" fill="none"/>
<path d="M170.0,353.3 l-6,15 M170.0,353.3 l5,15 M170.0,353.3 l-3,-9" stroke="#8aa0c8" stroke-opacity="0.18" stroke-width="0.6" fill="none"/>
<circle cx="300.2" cy="229.4" r="1.3" fill="#8f9fc0" fill-opacity="0.75"/>
<circle cx="328.5" cy="248.3" r="1.3" fill="#8f9fc0" fill-opacity="0.75"/>
<circle cx="301.3" cy="312.7" r="1.3" fill="#8f9fc0" fill-opacity="0.75"/>
<circle cx="236.0" cy="321.7" r="1.3" fill="#8f9fc0" fill-opacity="0.75"/>
<circle cx="211.5" cy="258.5" r="1.3" fill="#8f9fc0" fill-opacity="0.75"/>
<circle cx="206.4" cy="339.7" r="1.3" fill="#8f9fc0" fill-opacity="0.75"/>
<circle cx="220.0" cy="347.8" r="1.3" fill="#8f9fc0" fill-opacity="0.75"/>
<circle cx="82.5" cy="351.3" r="1.3" fill="#8f9fc0" fill-opacity="0.75"/>
<circle cx="145.5" cy="345.3" r="1.3" fill="#8f9fc0" fill-opacity="0.75"/>
<circle cx="170.0" cy="353.3" r="1.3" fill="#8f9fc0" fill-opacity="0.75"/>
<circle cx="268.8" cy="120.6" r="1.6" fill="#6aaee0" fill-opacity="0.68" filter="url(#bl)"/>
<circle cx="140.9" cy="165.4" r="3.5" fill="#3a5a9a" fill-opacity="0.26" filter="url(#bl)"/>
<circle cx="204.3" cy="185.0" r="2.2" fill="#4a70b0" fill-opacity="0.34" filter="url(#bl)"/>
<circle cx="178.0" cy="185.0" r="1.5" fill="#4a70b0" fill-opacity="0.30" filter="url(#bl)"/>
<circle cx="306.5" cy="189.8" r="3.5" fill="#3a5a9a" fill-opacity="0.30" filter="url(#bl)"/>
<circle cx="238.4" cy="204.0" r="3.2" fill="#3a5a9a" fill-opacity="0.30" filter="url(#bl)"/>
<circle cx="123.3" cy="368.6" r="2.8" fill="#4a80c8" fill-opacity="0.45" filter="url(#bl)"/>
<circle cx="278.5" cy="346.7" r="2.6" fill="#5a88c8" fill-opacity="0.41" filter="url(#bl)"/>
<circle cx="279.5" cy="356.7" r="3.2" fill="#5a88c8" fill-opacity="0.38" filter="url(#bl)"/>
<circle cx="284.5" cy="329.8" r="3.5" fill="#3a5a9a" fill-opacity="0.26" filter="url(#bl)"/>
<circle cx="292.0" cy="128.0" r="7.0" fill="#1a3566" fill-opacity="0.38" filter="url(#bl)"/>
<circle cx="310.0" cy="132.0" r="6.0" fill="#1a3566" fill-opacity="0.30" filter="url(#bl)"/>
<circle cx="206.0" cy="339.8" r="1.5" fill="#6a90c8" fill-opacity="0.38" filter="url(#bl)"/>
<circle cx="300.0" cy="365.0" r="6.0" fill="#1a3a70" fill-opacity="0.38" filter="url(#bl)"/>
<circle cx="250.0" cy="372.0" r="5.0" fill="#1a3a70" fill-opacity="0.38" filter="url(#bl)"/>
<circle cx="200.0" cy="365.0" r="4.0" fill="#1a3a70" fill-opacity="0.38" filter="url(#bl)"/></svg>
<div style="position:absolute;left:0;bottom:0;width:331px;height:3px;background:linear-gradient(rgba(0,0,0,0.15),rgba(10,12,16,0.75))"></div>
<div id="cardtxt">Collision-free,<br>cycletime-optimized<br>robot programmes.<br>Automatically<br>generated within your<br>known workflows.</div>
</div></div>
</body></html>
